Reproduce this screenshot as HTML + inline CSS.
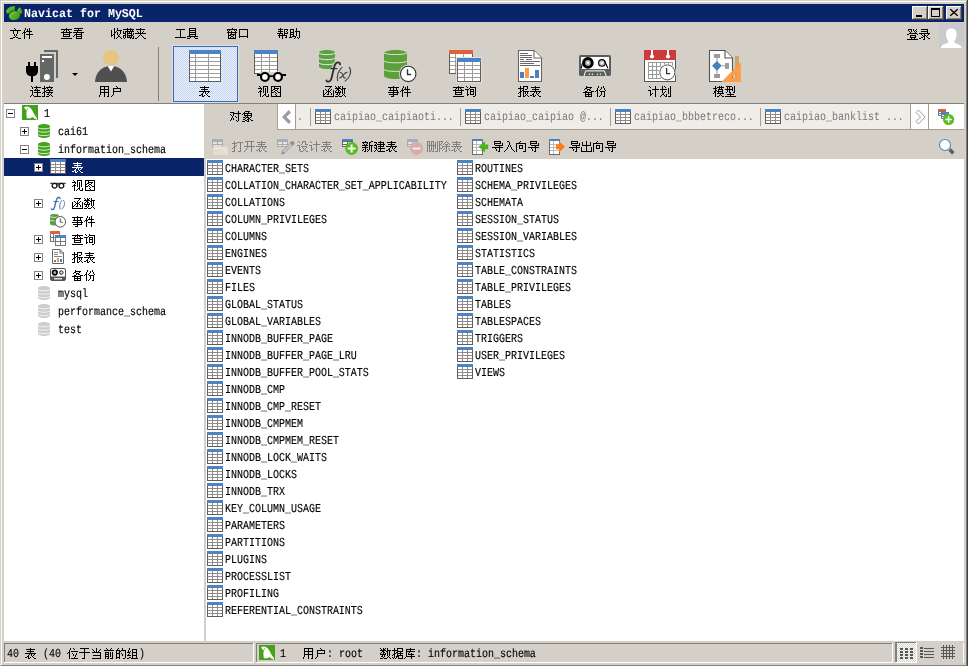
<!DOCTYPE html>
<html lang="zh"><head><meta charset="utf-8"><title>Navicat for MySQL</title>
<style>
html,body{margin:0;padding:0}
body{width:968px;height:666px;position:relative;overflow:hidden;background:#D4D0C8;font-family:"Liberation Sans",sans-serif;font-size:12px;line-height:12px;color:#000}
.a{position:absolute}
div,span,svg{position:absolute;display:block}
svg{overflow:visible}
.c{font-family:"Liberation Sans",sans-serif;font-size:12px;line-height:12px;height:12px;white-space:nowrap;letter-spacing:0}
.m{font-family:"Liberation Mono",monospace;font-size:12.14px;line-height:12px;height:12px;white-space:pre;text-rendering:geometricPrecision;transform:scaleX(.8237);transform-origin:0 0;-webkit-text-stroke:.15px currentColor}
.c i{position:absolute;left:0;top:0;font-style:normal;color:transparent;overflow:hidden;width:100%;height:12px}
.g{color:#808080}
.w{color:#fff}
.px{shape-rendering:crispEdges}
</style></head>
<body>
<div id="app" style="left:0;top:0;width:968px;height:666px;will-change:transform">
<svg width="0" height="0" style="left:0;top:0"><defs><symbol id="tb" viewBox="0 0 16 15"><g shape-rendering="crispEdges"><rect width="16" height="3" fill="#4A84C4"/><rect y="3" width="16" height="12" fill="#5e5e5e"/><rect x="1" y="3" width="14" height="11" fill="#908c8c"/><rect x="1" y="3" width="4" height="2" fill="#fff"/><rect x="6" y="3" width="4" height="2" fill="#fff"/><rect x="11" y="3" width="4" height="2" fill="#fff"/><rect x="1" y="6" width="4" height="2" fill="#fff"/><rect x="6" y="6" width="4" height="2" fill="#fff"/><rect x="11" y="6" width="4" height="2" fill="#fff"/><rect x="1" y="9" width="4" height="2" fill="#fff"/><rect x="6" y="9" width="4" height="2" fill="#fff"/><rect x="11" y="9" width="4" height="2" fill="#fff"/><rect x="1" y="12" width="4" height="2" fill="#fff"/><rect x="6" y="12" width="4" height="2" fill="#fff"/><rect x="11" y="12" width="4" height="2" fill="#fff"/></g></symbol><symbol id="cg" viewBox="0 0 12 14"><path d="M0 2.2C0 1 2.7 0 6 0s6 1 6 2.2v9.6C12 13 9.3 14 6 14s-6-1-6-2.2z" fill="#44A31E"/><path d="M0 3.6c1.5 1.6 10.5 1.6 12 0" fill="none" stroke="#d8f0c8" stroke-width="1"/><path d="M0 7.0c1.5 1.6 10.5 1.6 12 0" fill="none" stroke="#d8f0c8" stroke-width="1"/><path d="M0 10.4c1.5 1.6 10.5 1.6 12 0" fill="none" stroke="#d8f0c8" stroke-width="1"/></symbol><symbol id="cy" viewBox="0 0 12 14"><path d="M0 2.2C0 1 2.7 0 6 0s6 1 6 2.2v9.6C12 13 9.3 14 6 14s-6-1-6-2.2z" fill="#CDCDCD"/><path d="M0 3.6c1.5 1.6 10.5 1.6 12 0" fill="none" stroke="#f4f4f4" stroke-width="1"/><path d="M0 7.0c1.5 1.6 10.5 1.6 12 0" fill="none" stroke="#f4f4f4" stroke-width="1"/><path d="M0 10.4c1.5 1.6 10.5 1.6 12 0" fill="none" stroke="#f4f4f4" stroke-width="1"/></symbol><symbol id="pl" viewBox="0 0 9 9"><g shape-rendering="crispEdges"><rect width="9" height="9" fill="#848488"/><rect x="1" y="1" width="7" height="7" fill="#fff"/><rect x="2" y="4" width="5" height="1" fill="#000"/><rect x="4" y="2" width="1" height="5" fill="#000"/></g></symbol><symbol id="mi" viewBox="0 0 9 9"><g shape-rendering="crispEdges"><rect width="9" height="9" fill="#848488"/><rect x="1" y="1" width="7" height="7" fill="#fff"/><rect x="2" y="4" width="5" height="1" fill="#000"/></g></symbol><symbol id="cn" viewBox="0 0 16 15"><rect width="16" height="15" fill="#43A217"/><path d="M2 2.200L4.200 1.500C6.500 1.300 8.600 2.600 10 5c1.200 2 2 4.200 3.400 6 .8 1 1.600 1.800 1.800 3.600L14 14.700 13.600 13.500 12.600 14C12 13 11 12.300 9.800 12L9.200 13.200H5C4.800 12.500 4.500 12 4.600 11 4.200 9 4.300 7 5 5.400L3.400 4.300z" fill="#fff"/><circle cx="5.600" cy="3.900" r=".6" fill="#43A217"/></symbol></defs></svg>
<svg width="0" height="0" style="left:0;top:0"><defs><symbol id="u4e8b" overflow="visible"><path shape-rendering="crispEdges" d="M5 0h1v1h-1zM0 1h11v1h-11zM2 2h1v1h-1zM5 2h1v1h-1zM8 2h1v1h-1zM2 3h1v1h-1zM5 3h1v1h-1zM8 3h1v1h-1zM1 4h9v1h-9zM5 5h1v1h-1zM9 5h1v1h-1zM0 6h11v1h-11zM5 7h1v1h-1zM9 7h1v1h-1zM1 8h9v1h-9zM5 9h1v1h-1zM3 10h3v1h-3z"/></symbol><symbol id="u4e8e" overflow="visible"><path shape-rendering="crispEdges" d="M1 0h9v1h-9zM5 1h1v1h-1zM5 2h1v1h-1zM5 3h1v1h-1zM0 4h11v1h-11zM5 5h1v1h-1zM5 6h1v1h-1zM5 7h1v1h-1zM5 8h1v1h-1zM5 9h1v1h-1zM3 10h3v1h-3z"/></symbol><symbol id="u4ef6" overflow="visible"><path shape-rendering="crispEdges" d="M3 0h1v1h-1zM7 0h1v1h-1zM3 1h1v1h-1zM5 1h1v1h-1zM7 1h1v1h-1zM2 2h1v1h-1zM5 2h1v1h-1zM7 2h1v1h-1zM2 3h1v1h-1zM4 3h6v1h-6zM1 4h3v1h-3zM7 4h1v1h-1zM0 5h1v1h-1zM2 5h1v1h-1zM7 5h1v1h-1zM2 6h1v1h-1zM4 6h7v1h-7zM2 7h1v1h-1zM7 7h1v1h-1zM2 8h1v1h-1zM7 8h1v1h-1zM2 9h1v1h-1zM7 9h1v1h-1zM2 10h1v1h-1zM7 10h1v1h-1z"/></symbol><symbol id="u4efd" overflow="visible"><path shape-rendering="crispEdges" d="M3 0h1v1h-1zM8 0h1v1h-1zM3 1h1v1h-1zM6 1h1v1h-1zM8 1h1v1h-1zM2 2h1v1h-1zM6 2h1v1h-1zM9 2h1v1h-1zM2 3h1v1h-1zM5 3h1v1h-1zM9 3h1v1h-1zM1 4h2v1h-2zM4 4h1v1h-1zM10 4h1v1h-1zM0 5h1v1h-1zM2 5h1v1h-1zM5 5h5v1h-5zM2 6h1v1h-1zM6 6h1v1h-1zM9 6h1v1h-1zM2 7h1v1h-1zM6 7h1v1h-1zM9 7h1v1h-1zM2 8h1v1h-1zM6 8h1v1h-1zM9 8h1v1h-1zM2 9h1v1h-1zM5 9h1v1h-1zM9 9h1v1h-1zM2 10h1v1h-1zM4 10h1v1h-1zM8 10h2v1h-2z"/></symbol><symbol id="u4f4d" overflow="visible"><path shape-rendering="crispEdges" d="M3 0h1v1h-1zM6 0h1v1h-1zM3 1h1v1h-1zM7 1h1v1h-1zM2 2h1v1h-1zM2 3h1v1h-1zM4 3h7v1h-7zM1 4h2v1h-2zM0 5h1v1h-1zM2 5h1v1h-1zM5 5h1v1h-1zM9 5h1v1h-1zM2 6h1v1h-1zM6 6h1v1h-1zM9 6h1v1h-1zM2 7h1v1h-1zM6 7h1v1h-1zM8 7h1v1h-1zM2 8h1v1h-1zM8 8h1v1h-1zM2 9h1v1h-1zM7 9h1v1h-1zM2 10h1v1h-1zM4 10h7v1h-7z"/></symbol><symbol id="u5165" overflow="visible"><path shape-rendering="crispEdges" d="M3 0h2v1h-2zM5 1h1v1h-1zM5 2h1v1h-1zM5 3h1v1h-1zM4 4h1v1h-1zM6 4h1v1h-1zM4 5h1v1h-1zM6 5h1v1h-1zM3 6h1v1h-1zM7 6h1v1h-1zM3 7h1v1h-1zM7 7h1v1h-1zM2 8h1v1h-1zM8 8h1v1h-1zM1 9h1v1h-1zM9 9h1v1h-1zM0 10h1v1h-1zM10 10h1v1h-1z"/></symbol><symbol id="u5177" overflow="visible"><path shape-rendering="crispEdges" d="M2 0h7v1h-7zM2 1h1v1h-1zM8 1h1v1h-1zM2 2h7v1h-7zM2 3h1v1h-1zM8 3h1v1h-1zM2 4h7v1h-7zM2 5h1v1h-1zM8 5h1v1h-1zM2 6h7v1h-7zM2 7h1v1h-1zM8 7h1v1h-1zM0 8h11v1h-11zM3 9h1v1h-1zM7 9h1v1h-1zM0 10h3v1h-3zM8 10h3v1h-3z"/></symbol><symbol id="u51fa" overflow="visible"><path shape-rendering="crispEdges" d="M5 0h1v1h-1zM1 1h1v1h-1zM5 1h1v1h-1zM9 1h1v1h-1zM1 2h1v1h-1zM5 2h1v1h-1zM9 2h1v1h-1zM1 3h1v1h-1zM5 3h1v1h-1zM9 3h1v1h-1zM1 4h9v1h-9zM5 5h1v1h-1zM0 6h1v1h-1zM5 6h1v1h-1zM10 6h1v1h-1zM0 7h1v1h-1zM5 7h1v1h-1zM10 7h1v1h-1zM0 8h1v1h-1zM5 8h1v1h-1zM10 8h1v1h-1zM0 9h1v1h-1zM5 9h1v1h-1zM10 9h1v1h-1zM0 10h11v1h-11z"/></symbol><symbol id="u51fd" overflow="visible"><path shape-rendering="crispEdges" d="M2 0h7v1h-7zM7 1h1v1h-1zM6 2h1v1h-1zM2 3h1v1h-1zM5 3h1v1h-1zM8 3h1v1h-1zM0 4h1v1h-1zM3 4h1v1h-1zM5 4h1v1h-1zM7 4h1v1h-1zM10 4h1v1h-1zM0 5h1v1h-1zM4 5h3v1h-3zM10 5h1v1h-1zM0 6h1v1h-1zM3 6h1v1h-1zM5 6h1v1h-1zM7 6h1v1h-1zM10 6h1v1h-1zM0 7h1v1h-1zM2 7h1v1h-1zM5 7h1v1h-1zM8 7h1v1h-1zM10 7h1v1h-1zM0 8h2v1h-2zM4 8h2v1h-2zM8 8h1v1h-1zM10 8h1v1h-1zM0 9h1v1h-1zM10 9h1v1h-1zM0 10h11v1h-11z"/></symbol><symbol id="u5212" overflow="visible"><path shape-rendering="crispEdges" d="M2 0h1v1h-1zM4 0h1v1h-1zM10 0h1v1h-1zM2 1h1v1h-1zM5 1h1v1h-1zM10 1h1v1h-1zM2 2h1v1h-1zM8 2h1v1h-1zM10 2h1v1h-1zM0 3h7v1h-7zM8 3h1v1h-1zM10 3h1v1h-1zM2 4h1v1h-1zM8 4h1v1h-1zM10 4h1v1h-1zM2 5h1v1h-1zM5 5h1v1h-1zM8 5h1v1h-1zM10 5h1v1h-1zM2 6h1v1h-1zM4 6h1v1h-1zM8 6h1v1h-1zM10 6h1v1h-1zM3 7h1v1h-1zM8 7h1v1h-1zM10 7h1v1h-1zM2 8h2v1h-2zM6 8h1v1h-1zM10 8h1v1h-1zM1 9h1v1h-1zM4 9h1v1h-1zM6 9h1v1h-1zM10 9h1v1h-1zM0 10h1v1h-1zM5 10h2v1h-2zM8 10h3v1h-3z"/></symbol><symbol id="u5220" overflow="visible"><path shape-rendering="crispEdges" d="M0 0h3v1h-3zM4 0h3v1h-3zM10 0h1v1h-1zM0 1h1v1h-1zM2 1h1v1h-1zM4 1h1v1h-1zM6 1h1v1h-1zM8 1h1v1h-1zM10 1h1v1h-1zM0 2h1v1h-1zM2 2h1v1h-1zM4 2h1v1h-1zM6 2h1v1h-1zM8 2h1v1h-1zM10 2h1v1h-1zM0 3h1v1h-1zM2 3h1v1h-1zM4 3h1v1h-1zM6 3h1v1h-1zM8 3h1v1h-1zM10 3h1v1h-1zM0 4h9v1h-9zM10 4h1v1h-1zM0 5h1v1h-1zM2 5h1v1h-1zM4 5h1v1h-1zM6 5h1v1h-1zM8 5h1v1h-1zM10 5h1v1h-1zM0 6h1v1h-1zM2 6h1v1h-1zM4 6h1v1h-1zM6 6h1v1h-1zM8 6h1v1h-1zM10 6h1v1h-1zM0 7h1v1h-1zM2 7h1v1h-1zM4 7h1v1h-1zM6 7h1v1h-1zM8 7h1v1h-1zM10 7h1v1h-1zM0 8h1v1h-1zM2 8h1v1h-1zM4 8h1v1h-1zM6 8h1v1h-1zM10 8h1v1h-1zM0 9h1v1h-1zM2 9h1v1h-1zM4 9h1v1h-1zM6 9h1v1h-1zM10 9h1v1h-1zM0 10h1v1h-1zM2 10h2v1h-2zM5 10h2v1h-2zM8 10h3v1h-3z"/></symbol><symbol id="u524d" overflow="visible"><path shape-rendering="crispEdges" d="M3 0h1v1h-1zM8 0h1v1h-1zM4 1h1v1h-1zM7 1h1v1h-1zM1 2h10v1h-10zM2 4h4v1h-4zM7 4h1v1h-1zM9 4h1v1h-1zM2 5h1v1h-1zM5 5h1v1h-1zM7 5h1v1h-1zM9 5h1v1h-1zM2 6h4v1h-4zM7 6h1v1h-1zM9 6h1v1h-1zM2 7h1v1h-1zM5 7h1v1h-1zM7 7h1v1h-1zM9 7h1v1h-1zM2 8h4v1h-4zM7 8h1v1h-1zM9 8h1v1h-1zM2 9h1v1h-1zM5 9h1v1h-1zM9 9h1v1h-1zM2 10h1v1h-1zM4 10h2v1h-2zM7 10h3v1h-3z"/></symbol><symbol id="u52a9" overflow="visible"><path shape-rendering="crispEdges" d="M7 0h1v1h-1zM1 1h4v1h-4zM7 1h1v1h-1zM1 2h1v1h-1zM4 2h1v1h-1zM7 2h1v1h-1zM1 3h1v1h-1zM4 3h1v1h-1zM6 3h5v1h-5zM1 4h4v1h-4zM7 4h1v1h-1zM10 4h1v1h-1zM1 5h1v1h-1zM4 5h1v1h-1zM7 5h1v1h-1zM10 5h1v1h-1zM1 6h4v1h-4zM7 6h1v1h-1zM10 6h1v1h-1zM1 7h1v1h-1zM4 7h1v1h-1zM7 7h1v1h-1zM10 7h1v1h-1zM1 8h1v1h-1zM3 8h4v1h-4zM10 8h1v1h-1zM0 9h3v1h-3zM6 9h1v1h-1zM8 9h1v1h-1zM10 9h1v1h-1zM5 10h1v1h-1zM9 10h1v1h-1z"/></symbol><symbol id="u53e3" overflow="visible"><path shape-rendering="crispEdges" d="M1 1h9v1h-9zM1 2h1v1h-1zM9 2h1v1h-1zM1 3h1v1h-1zM9 3h1v1h-1zM1 4h1v1h-1zM9 4h1v1h-1zM1 5h1v1h-1zM9 5h1v1h-1zM1 6h1v1h-1zM9 6h1v1h-1zM1 7h1v1h-1zM9 7h1v1h-1zM1 8h9v1h-9zM1 9h1v1h-1zM9 9h1v1h-1z"/></symbol><symbol id="u5411" overflow="visible"><path shape-rendering="crispEdges" d="M4 0h1v1h-1zM3 1h1v1h-1zM0 2h10v1h-10zM0 3h1v1h-1zM9 3h1v1h-1zM0 4h1v1h-1zM3 4h4v1h-4zM9 4h1v1h-1zM0 5h1v1h-1zM3 5h1v1h-1zM6 5h1v1h-1zM9 5h1v1h-1zM0 6h1v1h-1zM3 6h1v1h-1zM6 6h1v1h-1zM9 6h1v1h-1zM0 7h1v1h-1zM3 7h4v1h-4zM9 7h1v1h-1zM0 8h1v1h-1zM9 8h1v1h-1zM0 9h1v1h-1zM9 9h1v1h-1zM0 10h1v1h-1zM7 10h3v1h-3z"/></symbol><symbol id="u56fe" overflow="visible"><path shape-rendering="crispEdges" d="M1 0h10v1h-10zM1 1h1v1h-1zM4 1h1v1h-1zM10 1h1v1h-1zM1 2h1v1h-1zM4 2h5v1h-5zM10 2h1v1h-1zM1 3h1v1h-1zM3 3h2v1h-2zM7 3h1v1h-1zM10 3h1v1h-1zM1 4h2v1h-2zM5 4h2v1h-2zM10 4h1v1h-1zM1 5h1v1h-1zM4 5h1v1h-1zM7 5h1v1h-1zM10 5h1v1h-1zM1 6h3v1h-3zM5 6h1v1h-1zM8 6h3v1h-3zM1 7h1v1h-1zM6 7h1v1h-1zM10 7h1v1h-1zM1 8h1v1h-1zM5 8h1v1h-1zM10 8h1v1h-1zM1 9h1v1h-1zM6 9h1v1h-1zM10 9h1v1h-1zM1 10h10v1h-10z"/></symbol><symbol id="u578b" overflow="visible"><path shape-rendering="crispEdges" d="M1 0h6v1h-6zM9 0h1v1h-1zM2 1h1v1h-1zM4 1h1v1h-1zM7 1h1v1h-1zM9 1h1v1h-1zM2 2h1v1h-1zM4 2h1v1h-1zM7 2h1v1h-1zM9 2h1v1h-1zM0 3h8v1h-8zM9 3h1v1h-1zM2 4h1v1h-1zM4 4h1v1h-1zM7 4h1v1h-1zM9 4h1v1h-1zM2 5h1v1h-1zM4 5h1v1h-1zM9 5h1v1h-1zM1 6h1v1h-1zM4 6h2v1h-2zM8 6h2v1h-2zM5 7h1v1h-1zM2 8h7v1h-7zM5 9h1v1h-1zM0 10h11v1h-11z"/></symbol><symbol id="u5907" overflow="visible"><path shape-rendering="crispEdges" d="M3 0h1v1h-1zM3 1h6v1h-6zM2 2h2v1h-2zM7 2h1v1h-1zM1 3h1v1h-1zM4 3h3v1h-3zM4 4h1v1h-1zM6 4h2v1h-2zM2 5h2v1h-2zM8 5h3v1h-3zM0 6h9v1h-9zM2 7h1v1h-1zM5 7h1v1h-1zM8 7h1v1h-1zM2 8h7v1h-7zM2 9h1v1h-1zM5 9h1v1h-1zM8 9h1v1h-1zM2 10h7v1h-7z"/></symbol><symbol id="u5939" overflow="visible"><path shape-rendering="crispEdges" d="M5 0h1v1h-1zM1 1h9v1h-9zM5 2h1v1h-1zM2 3h1v1h-1zM5 3h1v1h-1zM8 3h1v1h-1zM3 4h1v1h-1zM5 4h1v1h-1zM7 4h1v1h-1zM0 5h11v1h-11zM5 6h1v1h-1zM4 7h1v1h-1zM6 7h1v1h-1zM3 8h1v1h-1zM7 8h1v1h-1zM2 9h1v1h-1zM8 9h1v1h-1zM0 10h2v1h-2zM9 10h2v1h-2z"/></symbol><symbol id="u5bf9" overflow="visible"><path shape-rendering="crispEdges" d="M8 0h1v1h-1zM0 1h4v1h-4zM8 1h1v1h-1zM3 2h8v1h-8zM0 3h1v1h-1zM3 3h1v1h-1zM8 3h1v1h-1zM1 4h1v1h-1zM3 4h1v1h-1zM8 4h1v1h-1zM2 5h1v1h-1zM5 5h1v1h-1zM8 5h1v1h-1zM2 6h1v1h-1zM6 6h1v1h-1zM8 6h1v1h-1zM1 7h1v1h-1zM3 7h1v1h-1zM8 7h1v1h-1zM1 8h1v1h-1zM3 8h1v1h-1zM8 8h1v1h-1zM0 9h1v1h-1zM6 9h1v1h-1zM8 9h1v1h-1zM7 10h1v1h-1z"/></symbol><symbol id="u5bfc" overflow="visible"><path shape-rendering="crispEdges" d="M2 0h7v1h-7zM2 1h1v1h-1zM8 1h1v1h-1zM2 2h7v1h-7zM10 2h1v1h-1zM2 3h1v1h-1zM10 3h1v1h-1zM3 4h8v1h-8zM7 5h1v1h-1zM0 6h11v1h-11zM3 7h1v1h-1zM7 7h1v1h-1zM4 8h1v1h-1zM7 8h1v1h-1zM4 9h1v1h-1zM7 9h1v1h-1zM6 10h2v1h-2z"/></symbol><symbol id="u5de5" overflow="visible"><path shape-rendering="crispEdges" d="M1 1h9v1h-9zM5 2h1v1h-1zM5 3h1v1h-1zM5 4h1v1h-1zM5 5h1v1h-1zM5 6h1v1h-1zM5 7h1v1h-1zM5 8h1v1h-1zM0 9h11v1h-11z"/></symbol><symbol id="u5e2e" overflow="visible"><path shape-rendering="crispEdges" d="M3 0h1v1h-1zM1 1h5v1h-5zM7 1h4v1h-4zM3 2h1v1h-1zM7 2h1v1h-1zM10 2h1v1h-1zM1 3h5v1h-5zM7 3h1v1h-1zM9 3h1v1h-1zM3 4h1v1h-1zM7 4h1v1h-1zM10 4h1v1h-1zM0 5h6v1h-6zM7 5h4v1h-4zM2 6h1v1h-1zM5 6h1v1h-1zM7 6h1v1h-1zM1 7h9v1h-9zM2 8h1v1h-1zM5 8h1v1h-1zM9 8h1v1h-1zM2 9h1v1h-1zM5 9h1v1h-1zM8 9h2v1h-2zM5 10h1v1h-1z"/></symbol><symbol id="u5e93" overflow="visible"><path shape-rendering="crispEdges" d="M6 0h1v1h-1zM2 1h9v1h-9zM2 2h1v1h-1zM6 2h1v1h-1zM2 3h9v1h-9zM2 4h1v1h-1zM5 4h1v1h-1zM2 5h1v1h-1zM4 5h1v1h-1zM7 5h1v1h-1zM2 6h1v1h-1zM4 6h6v1h-6zM2 7h1v1h-1zM7 7h1v1h-1zM2 8h9v1h-9zM1 9h1v1h-1zM7 9h1v1h-1zM0 10h1v1h-1zM7 10h1v1h-1z"/></symbol><symbol id="u5efa" overflow="visible"><path shape-rendering="crispEdges" d="M6 0h1v1h-1zM0 1h3v1h-3zM4 1h6v1h-6zM2 2h1v1h-1zM6 2h1v1h-1zM9 2h1v1h-1zM1 3h1v1h-1zM3 3h8v1h-8zM0 4h3v1h-3zM6 4h1v1h-1zM9 4h1v1h-1zM2 5h1v1h-1zM4 5h6v1h-6zM0 6h1v1h-1zM2 6h1v1h-1zM6 6h1v1h-1zM1 7h2v1h-2zM4 7h7v1h-7zM2 8h1v1h-1zM6 8h1v1h-1zM1 9h1v1h-1zM3 9h1v1h-1zM6 9h1v1h-1zM0 10h1v1h-1zM4 10h7v1h-7z"/></symbol><symbol id="u5f00" overflow="visible"><path shape-rendering="crispEdges" d="M1 0h9v1h-9zM3 1h1v1h-1zM7 1h1v1h-1zM3 2h1v1h-1zM7 2h1v1h-1zM3 3h1v1h-1zM7 3h1v1h-1zM3 4h1v1h-1zM7 4h1v1h-1zM0 5h11v1h-11zM3 6h1v1h-1zM7 6h1v1h-1zM2 7h1v1h-1zM7 7h1v1h-1zM2 8h1v1h-1zM7 8h1v1h-1zM1 9h1v1h-1zM7 9h1v1h-1zM0 10h1v1h-1zM7 10h1v1h-1z"/></symbol><symbol id="u5f53" overflow="visible"><path shape-rendering="crispEdges" d="M5 0h1v1h-1zM1 1h1v1h-1zM5 1h1v1h-1zM9 1h1v1h-1zM2 2h1v1h-1zM5 2h1v1h-1zM8 2h1v1h-1zM3 3h1v1h-1zM5 3h1v1h-1zM7 3h1v1h-1zM1 4h9v1h-9zM9 5h1v1h-1zM9 6h1v1h-1zM2 7h8v1h-8zM9 8h1v1h-1zM9 9h1v1h-1zM1 10h9v1h-9z"/></symbol><symbol id="u5f55" overflow="visible"><path shape-rendering="crispEdges" d="M2 0h7v1h-7zM8 1h1v1h-1zM2 2h7v1h-7zM8 3h1v1h-1zM0 4h11v1h-11zM2 5h1v1h-1zM5 5h1v1h-1zM9 5h1v1h-1zM3 6h1v1h-1zM5 6h2v1h-2zM8 6h1v1h-1zM4 7h2v1h-2zM7 7h1v1h-1zM2 8h2v1h-2zM5 8h1v1h-1zM8 8h1v1h-1zM0 9h2v1h-2zM5 9h1v1h-1zM9 9h2v1h-2zM4 10h2v1h-2z"/></symbol><symbol id="u6237" overflow="visible"><path shape-rendering="crispEdges" d="M5 0h1v1h-1zM6 1h1v1h-1zM2 2h8v1h-8zM2 3h1v1h-1zM9 3h1v1h-1zM2 4h1v1h-1zM9 4h1v1h-1zM2 5h8v1h-8zM2 6h1v1h-1zM2 7h1v1h-1zM2 8h1v1h-1zM1 9h1v1h-1zM0 10h1v1h-1z"/></symbol><symbol id="u6253" overflow="visible"><path shape-rendering="crispEdges" d="M2 0h1v1h-1zM2 1h1v1h-1zM5 1h6v1h-6zM0 2h5v1h-5zM8 2h1v1h-1zM2 3h1v1h-1zM8 3h1v1h-1zM2 4h1v1h-1zM4 4h1v1h-1zM8 4h1v1h-1zM2 5h2v1h-2zM8 5h1v1h-1zM1 6h2v1h-2zM8 6h1v1h-1zM0 7h1v1h-1zM2 7h1v1h-1zM8 7h1v1h-1zM2 8h1v1h-1zM8 8h1v1h-1zM2 9h1v1h-1zM8 9h1v1h-1zM0 10h3v1h-3zM6 10h3v1h-3z"/></symbol><symbol id="u62a5" overflow="visible"><path shape-rendering="crispEdges" d="M2 0h1v1h-1zM5 0h5v1h-5zM2 1h1v1h-1zM5 1h1v1h-1zM9 1h1v1h-1zM0 2h6v1h-6zM9 2h1v1h-1zM2 3h1v1h-1zM5 3h1v1h-1zM7 3h2v1h-2zM2 4h1v1h-1zM4 4h2v1h-2zM2 5h2v1h-2zM5 5h6v1h-6zM1 6h2v1h-2zM5 6h1v1h-1zM7 6h1v1h-1zM9 6h1v1h-1zM0 7h1v1h-1zM2 7h1v1h-1zM5 7h1v1h-1zM7 7h1v1h-1zM9 7h1v1h-1zM2 8h1v1h-1zM5 8h1v1h-1zM8 8h1v1h-1zM2 9h1v1h-1zM5 9h1v1h-1zM7 9h1v1h-1zM9 9h1v1h-1zM0 10h3v1h-3zM5 10h2v1h-2zM10 10h1v1h-1z"/></symbol><symbol id="u636e" overflow="visible"><path shape-rendering="crispEdges" d="M2 0h1v1h-1zM5 0h6v1h-6zM2 1h1v1h-1zM5 1h1v1h-1zM10 1h1v1h-1zM0 2h6v1h-6zM10 2h1v1h-1zM2 3h1v1h-1zM5 3h6v1h-6zM2 4h1v1h-1zM4 4h2v1h-2zM8 4h1v1h-1zM2 5h2v1h-2zM5 5h6v1h-6zM1 6h2v1h-2zM5 6h1v1h-1zM8 6h1v1h-1zM0 7h1v1h-1zM2 7h1v1h-1zM5 7h6v1h-6zM2 8h1v1h-1zM4 8h3v1h-3zM10 8h1v1h-1zM0 9h1v1h-1zM2 9h1v1h-1zM4 9h1v1h-1zM6 9h1v1h-1zM10 9h1v1h-1zM1 10h1v1h-1zM3 10h1v1h-1zM6 10h5v1h-5z"/></symbol><symbol id="u63a5" overflow="visible"><path shape-rendering="crispEdges" d="M2 0h1v1h-1zM7 0h1v1h-1zM2 1h1v1h-1zM4 1h7v1h-7zM0 2h4v1h-4zM5 2h1v1h-1zM9 2h1v1h-1zM2 3h1v1h-1zM6 3h1v1h-1zM8 3h1v1h-1zM2 4h1v1h-1zM4 4h7v1h-7zM2 5h2v1h-2zM7 5h1v1h-1zM1 6h2v1h-2zM4 6h7v1h-7zM0 7h1v1h-1zM2 7h1v1h-1zM6 7h1v1h-1zM9 7h1v1h-1zM2 8h1v1h-1zM5 8h2v1h-2zM8 8h1v1h-1zM2 9h1v1h-1zM7 9h1v1h-1zM9 9h1v1h-1zM0 10h3v1h-3zM4 10h3v1h-3zM10 10h1v1h-1z"/></symbol><symbol id="u6536" overflow="visible"><path shape-rendering="crispEdges" d="M3 0h1v1h-1zM6 0h1v1h-1zM3 1h1v1h-1zM6 1h1v1h-1zM0 2h1v1h-1zM3 2h1v1h-1zM6 2h5v1h-5zM0 3h1v1h-1zM3 3h1v1h-1zM5 3h1v1h-1zM9 3h1v1h-1zM0 4h1v1h-1zM3 4h2v1h-2zM6 4h1v1h-1zM9 4h1v1h-1zM0 5h1v1h-1zM3 5h1v1h-1zM6 5h1v1h-1zM9 5h1v1h-1zM0 6h1v1h-1zM2 6h2v1h-2zM6 6h1v1h-1zM8 6h1v1h-1zM0 7h2v1h-2zM3 7h1v1h-1zM7 7h1v1h-1zM0 8h1v1h-1zM3 8h1v1h-1zM7 8h2v1h-2zM3 9h1v1h-1zM6 9h1v1h-1zM9 9h1v1h-1zM3 10h1v1h-1zM5 10h1v1h-1zM10 10h1v1h-1z"/></symbol><symbol id="u6570" overflow="visible"><path shape-rendering="crispEdges" d="M0 0h1v1h-1zM3 0h1v1h-1zM5 0h1v1h-1zM7 0h1v1h-1zM1 1h1v1h-1zM3 1h2v1h-2zM7 1h1v1h-1zM0 2h6v1h-6zM7 2h4v1h-4zM2 3h2v1h-2zM6 3h2v1h-2zM9 3h1v1h-1zM1 4h1v1h-1zM3 4h2v1h-2zM7 4h1v1h-1zM9 4h1v1h-1zM0 5h1v1h-1zM3 5h1v1h-1zM5 5h1v1h-1zM7 5h1v1h-1zM9 5h1v1h-1zM0 6h6v1h-6zM7 6h1v1h-1zM9 6h1v1h-1zM2 7h1v1h-1zM4 7h1v1h-1zM7 7h1v1h-1zM9 7h1v1h-1zM1 8h2v1h-2zM4 8h1v1h-1zM8 8h1v1h-1zM3 9h1v1h-1zM7 9h1v1h-1zM9 9h1v1h-1zM0 10h3v1h-3zM4 10h3v1h-3zM10 10h1v1h-1z"/></symbol><symbol id="u6587" overflow="visible"><path shape-rendering="crispEdges" d="M4 0h1v1h-1zM5 1h1v1h-1zM0 2h11v1h-11zM3 3h1v1h-1zM7 3h1v1h-1zM3 4h1v1h-1zM7 4h1v1h-1zM3 5h1v1h-1zM7 5h1v1h-1zM4 6h1v1h-1zM6 6h1v1h-1zM4 7h1v1h-1zM6 7h1v1h-1zM5 8h1v1h-1zM3 9h2v1h-2zM6 9h2v1h-2zM0 10h3v1h-3zM8 10h3v1h-3z"/></symbol><symbol id="u65b0" overflow="visible"><path shape-rendering="crispEdges" d="M3 0h1v1h-1zM9 0h2v1h-2zM0 1h6v1h-6zM7 1h2v1h-2zM1 2h1v1h-1zM5 2h1v1h-1zM7 2h1v1h-1zM2 3h1v1h-1zM4 3h1v1h-1zM7 3h1v1h-1zM0 4h6v1h-6zM7 4h4v1h-4zM3 5h1v1h-1zM7 5h1v1h-1zM9 5h1v1h-1zM0 6h6v1h-6zM7 6h1v1h-1zM9 6h1v1h-1zM3 7h1v1h-1zM7 7h1v1h-1zM9 7h1v1h-1zM1 8h1v1h-1zM3 8h1v1h-1zM5 8h1v1h-1zM7 8h1v1h-1zM9 8h1v1h-1zM0 9h1v1h-1zM3 9h1v1h-1zM6 9h1v1h-1zM9 9h1v1h-1zM2 10h2v1h-2zM5 10h1v1h-1zM9 10h1v1h-1z"/></symbol><symbol id="u67e5" overflow="visible"><path shape-rendering="crispEdges" d="M5 0h1v1h-1zM0 1h11v1h-11zM3 2h1v1h-1zM5 2h1v1h-1zM7 2h1v1h-1zM2 3h1v1h-1zM5 3h1v1h-1zM8 3h1v1h-1zM0 4h11v1h-11zM2 5h1v1h-1zM8 5h1v1h-1zM2 6h7v1h-7zM2 7h1v1h-1zM8 7h1v1h-1zM2 8h7v1h-7zM0 10h11v1h-11z"/></symbol><symbol id="u6a21" overflow="visible"><path shape-rendering="crispEdges" d="M2 0h1v1h-1zM6 0h1v1h-1zM8 0h1v1h-1zM2 1h1v1h-1zM4 1h7v1h-7zM0 2h4v1h-4zM6 2h1v1h-1zM8 2h1v1h-1zM2 3h1v1h-1zM5 3h5v1h-5zM2 4h2v1h-2zM5 4h1v1h-1zM9 4h1v1h-1zM1 5h2v1h-2zM4 5h6v1h-6zM1 6h2v1h-2zM5 6h1v1h-1zM9 6h1v1h-1zM0 7h1v1h-1zM2 7h1v1h-1zM4 7h7v1h-7zM2 8h1v1h-1zM7 8h1v1h-1zM2 9h1v1h-1zM6 9h1v1h-1zM8 9h1v1h-1zM2 10h1v1h-1zM4 10h2v1h-2zM9 10h2v1h-2z"/></symbol><symbol id="u7528" overflow="visible"><path shape-rendering="crispEdges" d="M1 0h9v1h-9zM1 1h1v1h-1zM5 1h1v1h-1zM9 1h1v1h-1zM1 2h1v1h-1zM5 2h1v1h-1zM9 2h1v1h-1zM1 3h9v1h-9zM1 4h1v1h-1zM5 4h1v1h-1zM9 4h1v1h-1zM1 5h1v1h-1zM5 5h1v1h-1zM9 5h1v1h-1zM1 6h9v1h-9zM1 7h1v1h-1zM5 7h1v1h-1zM9 7h1v1h-1zM1 8h1v1h-1zM5 8h1v1h-1zM9 8h1v1h-1zM0 9h1v1h-1zM5 9h1v1h-1zM9 9h1v1h-1zM0 10h1v1h-1zM5 10h1v1h-1zM8 10h2v1h-2z"/></symbol><symbol id="u767b" overflow="visible"><path shape-rendering="crispEdges" d="M1 0h4v1h-4zM6 0h1v1h-1zM9 0h1v1h-1zM1 1h1v1h-1zM4 1h1v1h-1zM6 1h1v1h-1zM8 1h1v1h-1zM2 2h1v1h-1zM4 2h1v1h-1zM7 2h1v1h-1zM9 2h1v1h-1zM3 3h1v1h-1zM8 3h1v1h-1zM2 4h8v1h-8zM0 5h2v1h-2zM10 5h1v1h-1zM3 6h6v1h-6zM3 7h1v1h-1zM8 7h1v1h-1zM3 8h6v1h-6zM4 9h1v1h-1zM7 9h1v1h-1zM0 10h11v1h-11z"/></symbol><symbol id="u7684" overflow="visible"><path shape-rendering="crispEdges" d="M3 0h1v1h-1zM7 0h1v1h-1zM2 1h1v1h-1zM7 1h1v1h-1zM1 2h4v1h-4zM6 2h5v1h-5zM1 3h1v1h-1zM4 3h2v1h-2zM10 3h1v1h-1zM1 4h1v1h-1zM4 4h1v1h-1zM10 4h1v1h-1zM1 5h4v1h-4zM6 5h1v1h-1zM10 5h1v1h-1zM1 6h1v1h-1zM4 6h1v1h-1zM7 6h1v1h-1zM10 6h1v1h-1zM1 7h1v1h-1zM4 7h1v1h-1zM7 7h1v1h-1zM10 7h1v1h-1zM1 8h1v1h-1zM4 8h1v1h-1zM10 8h1v1h-1zM1 9h4v1h-4zM10 9h1v1h-1zM1 10h1v1h-1zM4 10h1v1h-1zM8 10h2v1h-2z"/></symbol><symbol id="u770b" overflow="visible"><path shape-rendering="crispEdges" d="M1 0h9v1h-9zM5 1h1v1h-1zM1 2h8v1h-8zM4 3h1v1h-1zM0 4h11v1h-11zM3 5h1v1h-1zM8 5h1v1h-1zM2 6h7v1h-7zM1 7h1v1h-1zM3 7h1v1h-1zM8 7h1v1h-1zM0 8h1v1h-1zM3 8h6v1h-6zM3 9h1v1h-1zM8 9h1v1h-1zM3 10h6v1h-6z"/></symbol><symbol id="u7a97" overflow="visible"><path shape-rendering="crispEdges" d="M6 0h1v1h-1zM1 1h10v1h-10zM1 2h1v1h-1zM3 2h1v1h-1zM8 2h1v1h-1zM10 2h1v1h-1zM2 3h1v1h-1zM5 3h1v1h-1zM9 3h1v1h-1zM1 4h10v1h-10zM2 5h1v1h-1zM5 5h1v1h-1zM9 5h1v1h-1zM2 6h1v1h-1zM4 6h6v1h-6zM2 7h3v1h-3zM7 7h1v1h-1zM9 7h1v1h-1zM2 8h1v1h-1zM5 8h2v1h-2zM9 8h1v1h-1zM2 9h1v1h-1zM4 9h1v1h-1zM7 9h1v1h-1zM9 9h1v1h-1zM2 10h8v1h-8z"/></symbol><symbol id="u7ec4" overflow="visible"><path shape-rendering="crispEdges" d="M2 0h1v1h-1zM2 1h1v1h-1zM5 1h5v1h-5zM1 2h1v1h-1zM5 2h1v1h-1zM9 2h1v1h-1zM1 3h1v1h-1zM3 3h1v1h-1zM5 3h1v1h-1zM9 3h1v1h-1zM0 4h3v1h-3zM5 4h5v1h-5zM2 5h1v1h-1zM5 5h1v1h-1zM9 5h1v1h-1zM1 6h1v1h-1zM5 6h1v1h-1zM9 6h1v1h-1zM0 7h4v1h-4zM5 7h5v1h-5zM5 8h1v1h-1zM9 8h1v1h-1zM2 9h2v1h-2zM5 9h1v1h-1zM9 9h1v1h-1zM0 10h2v1h-2zM4 10h7v1h-7z"/></symbol><symbol id="u85cf" overflow="visible"><path shape-rendering="crispEdges" d="M4 0h1v1h-1zM7 0h1v1h-1zM0 1h11v1h-11zM4 2h1v1h-1zM7 2h1v1h-1zM9 2h1v1h-1zM0 3h1v1h-1zM2 3h9v1h-9zM0 4h1v1h-1zM2 4h1v1h-1zM4 4h1v1h-1zM6 4h1v1h-1zM8 4h1v1h-1zM0 5h3v1h-3zM4 5h5v1h-5zM10 5h1v1h-1zM2 6h1v1h-1zM4 6h1v1h-1zM8 6h1v1h-1zM10 6h1v1h-1zM0 7h3v1h-3zM4 7h6v1h-6zM0 8h1v1h-1zM2 8h1v1h-1zM4 8h1v1h-1zM6 8h1v1h-1zM8 8h1v1h-1zM10 8h1v1h-1zM0 9h1v1h-1zM2 9h1v1h-1zM4 9h5v1h-5zM10 9h1v1h-1zM1 10h1v1h-1zM7 10h1v1h-1zM9 10h2v1h-2z"/></symbol><symbol id="u8868" overflow="visible"><path shape-rendering="crispEdges" d="M5 0h1v1h-1zM1 1h9v1h-9zM5 2h1v1h-1zM2 3h7v1h-7zM5 4h1v1h-1zM0 5h11v1h-11zM4 6h1v1h-1zM6 6h1v1h-1zM9 6h1v1h-1zM3 7h1v1h-1zM6 7h1v1h-1zM8 7h1v1h-1zM2 8h2v1h-2zM7 8h1v1h-1zM0 9h2v1h-2zM3 9h1v1h-1zM5 9h1v1h-1zM8 9h1v1h-1zM3 10h2v1h-2zM9 10h2v1h-2z"/></symbol><symbol id="u89c6" overflow="visible"><path shape-rendering="crispEdges" d="M1 0h1v1h-1zM5 0h5v1h-5zM2 1h1v1h-1zM5 1h1v1h-1zM9 1h1v1h-1zM0 2h4v1h-4zM5 2h1v1h-1zM7 2h1v1h-1zM9 2h1v1h-1zM3 3h1v1h-1zM5 3h1v1h-1zM7 3h1v1h-1zM9 3h1v1h-1zM2 4h1v1h-1zM5 4h1v1h-1zM7 4h1v1h-1zM9 4h1v1h-1zM1 5h3v1h-3zM5 5h1v1h-1zM7 5h1v1h-1zM9 5h1v1h-1zM0 6h1v1h-1zM2 6h1v1h-1zM5 6h1v1h-1zM7 6h1v1h-1zM9 6h1v1h-1zM2 7h1v1h-1zM7 7h1v1h-1zM2 8h1v1h-1zM6 8h2v1h-2zM10 8h1v1h-1zM2 9h1v1h-1zM5 9h1v1h-1zM7 9h1v1h-1zM10 9h1v1h-1zM2 10h1v1h-1zM4 10h1v1h-1zM8 10h3v1h-3z"/></symbol><symbol id="u8ba1" overflow="visible"><path shape-rendering="crispEdges" d="M1 0h1v1h-1zM7 0h1v1h-1zM2 1h1v1h-1zM7 1h1v1h-1zM7 2h1v1h-1zM4 3h7v1h-7zM0 4h3v1h-3zM7 4h1v1h-1zM2 5h1v1h-1zM7 5h1v1h-1zM2 6h1v1h-1zM7 6h1v1h-1zM2 7h1v1h-1zM4 7h1v1h-1zM7 7h1v1h-1zM2 8h2v1h-2zM7 8h1v1h-1zM2 9h1v1h-1zM7 9h1v1h-1zM7 10h1v1h-1z"/></symbol><symbol id="u8bbe" overflow="visible"><path shape-rendering="crispEdges" d="M1 0h1v1h-1zM5 0h4v1h-4zM2 1h1v1h-1zM5 1h1v1h-1zM8 1h1v1h-1zM5 2h1v1h-1zM8 2h1v1h-1zM4 3h1v1h-1zM8 3h3v1h-3zM0 4h3v1h-3zM2 5h1v1h-1zM4 5h6v1h-6zM2 6h1v1h-1zM5 6h1v1h-1zM9 6h1v1h-1zM2 7h1v1h-1zM6 7h1v1h-1zM8 7h1v1h-1zM2 8h2v1h-2zM7 8h1v1h-1zM2 9h1v1h-1zM6 9h1v1h-1zM8 9h1v1h-1zM3 10h3v1h-3zM9 10h2v1h-2z"/></symbol><symbol id="u8be2" overflow="visible"><path shape-rendering="crispEdges" d="M1 0h1v1h-1zM5 0h1v1h-1zM2 1h1v1h-1zM5 1h6v1h-6zM4 2h1v1h-1zM10 2h1v1h-1zM0 3h4v1h-4zM5 3h4v1h-4zM10 3h1v1h-1zM2 4h1v1h-1zM5 4h1v1h-1zM8 4h1v1h-1zM10 4h1v1h-1zM2 5h1v1h-1zM5 5h4v1h-4zM10 5h1v1h-1zM2 6h1v1h-1zM5 6h1v1h-1zM8 6h1v1h-1zM10 6h1v1h-1zM2 7h1v1h-1zM5 7h1v1h-1zM8 7h1v1h-1zM10 7h1v1h-1zM2 8h2v1h-2zM5 8h4v1h-4zM10 8h1v1h-1zM2 9h1v1h-1zM10 9h1v1h-1zM8 10h2v1h-2z"/></symbol><symbol id="u8c61" overflow="visible"><path shape-rendering="crispEdges" d="M3 0h5v1h-5zM2 1h1v1h-1zM6 1h1v1h-1zM1 2h9v1h-9zM0 3h1v1h-1zM2 3h1v1h-1zM5 3h1v1h-1zM9 3h1v1h-1zM2 4h8v1h-8zM3 5h1v1h-1zM5 5h1v1h-1zM9 5h1v1h-1zM1 6h2v1h-2zM4 6h3v1h-3zM8 6h1v1h-1zM3 7h1v1h-1zM6 7h2v1h-2zM1 8h2v1h-2zM5 8h2v1h-2zM8 8h1v1h-1zM3 9h2v1h-2zM6 9h1v1h-1zM9 9h2v1h-2zM0 10h3v1h-3zM5 10h2v1h-2z"/></symbol><symbol id="u8fde" overflow="visible"><path shape-rendering="crispEdges" d="M1 0h1v1h-1zM6 0h1v1h-1zM2 1h1v1h-1zM4 1h7v1h-7zM2 2h1v1h-1zM6 2h1v1h-1zM5 3h1v1h-1zM7 3h1v1h-1zM0 4h3v1h-3zM4 4h6v1h-6zM2 5h1v1h-1zM7 5h1v1h-1zM2 6h1v1h-1zM4 6h7v1h-7zM2 7h1v1h-1zM7 7h1v1h-1zM2 8h1v1h-1zM7 8h1v1h-1zM1 9h1v1h-1zM3 9h1v1h-1zM7 9h1v1h-1zM0 10h1v1h-1zM4 10h7v1h-7z"/></symbol><symbol id="u9664" overflow="visible"><path shape-rendering="crispEdges" d="M0 0h4v1h-4zM7 0h1v1h-1zM0 1h1v1h-1zM3 1h1v1h-1zM6 1h1v1h-1zM8 1h1v1h-1zM0 2h1v1h-1zM2 2h1v1h-1zM5 2h1v1h-1zM9 2h1v1h-1zM0 3h2v1h-2zM4 3h1v1h-1zM6 3h3v1h-3zM10 3h1v1h-1zM0 4h1v1h-1zM2 4h1v1h-1zM7 4h1v1h-1zM0 5h1v1h-1zM3 5h8v1h-8zM0 6h1v1h-1zM3 6h1v1h-1zM7 6h1v1h-1zM0 7h3v1h-3zM5 7h1v1h-1zM7 7h1v1h-1zM9 7h1v1h-1zM0 8h1v1h-1zM4 8h1v1h-1zM7 8h1v1h-1zM10 8h1v1h-1zM0 9h1v1h-1zM3 9h1v1h-1zM7 9h1v1h-1zM10 9h1v1h-1zM0 10h1v1h-1zM6 10h2v1h-2z"/></symbol></defs></svg>
<div id="frame" style="left:0;top:0;width:968px;height:666px">
<div style="left:967px;top:0px;width:1px;height:666px;background:#404040;"></div><div style="left:1px;top:665px;width:966px;height:1px;background:#808080;"></div>
<div style="left:966px;top:1px;width:1px;height:665px;background:#808080;"></div>
<div style="left:1px;top:1px;width:965px;height:1px;background:#fff;"></div><div style="left:1px;top:1px;width:1px;height:664px;background:#fff;"></div>
</div>
<div id="titlebar" style="left:4px;top:4px;width:960px;height:18px;background:#0A246A">
<svg width="17" height="15" viewBox="0 0 17 15" style="left:2px;top:2px"><defs><linearGradient id="lg" x1="0" y1="0" x2="1" y2="1"><stop offset="0" stop-color="#7fce3c"/><stop offset="1" stop-color="#2f920c"/></linearGradient></defs><g fill="url(#lg)"><ellipse cx="8.500" cy="9.600" rx="5.700" ry="4.400" transform="rotate(-14 8.500 9.600)"/><path d="M0 6C.5 3 3 .5 8.900 0V4.500C6 4.500 4 5.500 3.200 7.600H1z"/><path d="M13.500 1c1.500 1.500 2.800 3.500 2.700 5.500-.100 1.300-1.200 1.800-2.200 1.100-1-1.100-2-2.600-3-3.400 1-.700 2-2 2.500-3.200z"/></g></svg>
<span style="left:20px;top:4px;font:bold 12.140px/12px 'Liberation Mono',monospace;color:#fff;white-space:pre;text-rendering:geometricPrecision;transform:scaleX(.9608);transform-origin:0 0">Navicat for MySQL</span>
<div style="left:908px;top:2px;width:16px;height:14px;background:#D4D0C8"><div style="left:0px;top:0px;width:15px;height:1px;background:#fff;"></div><div style="left:0px;top:0px;width:1px;height:13px;background:#fff;"></div><div style="left:15px;top:0px;width:1px;height:14px;background:#404040;"></div><div style="left:0px;top:13px;width:16px;height:1px;background:#404040;"></div><div style="left:14px;top:1px;width:1px;height:12px;background:#808080;"></div><div style="left:1px;top:12px;width:14px;height:1px;background:#808080;"></div><div style="left:4px;top:9px;width:6px;height:2px;background:#000;"></div></div>
<div style="left:924px;top:2px;width:16px;height:14px;background:#D4D0C8"><div style="left:0px;top:0px;width:15px;height:1px;background:#fff;"></div><div style="left:0px;top:0px;width:1px;height:13px;background:#fff;"></div><div style="left:15px;top:0px;width:1px;height:14px;background:#404040;"></div><div style="left:0px;top:13px;width:16px;height:1px;background:#404040;"></div><div style="left:14px;top:1px;width:1px;height:12px;background:#808080;"></div><div style="left:1px;top:12px;width:14px;height:1px;background:#808080;"></div><div style="left:3px;top:2px;width:9px;height:9px;background:#000;"></div><div style="left:4px;top:4px;width:7px;height:6px;background:#D4D0C8;"></div></div>
<div style="left:942px;top:2px;width:16px;height:14px;background:#D4D0C8"><div style="left:0px;top:0px;width:15px;height:1px;background:#fff;"></div><div style="left:0px;top:0px;width:1px;height:13px;background:#fff;"></div><div style="left:15px;top:0px;width:1px;height:14px;background:#404040;"></div><div style="left:0px;top:13px;width:16px;height:1px;background:#404040;"></div><div style="left:14px;top:1px;width:1px;height:12px;background:#808080;"></div><div style="left:1px;top:12px;width:14px;height:1px;background:#808080;"></div><svg width="16" height="14" viewBox="0 0 16 14" style="left:0;top:0"><path d="M4.300 3.300l7.400 6.400M11.700 3.300l-7.400 6.400" stroke="#000" stroke-width="1.400" fill="none"/></svg></div>
</div>
<div id="menubar" style="left:4px;top:22px;width:960px;height:20px">
<span class="c " style="left:6px;top:6px;width:24px;"><svg width="24" height="12" style="left:0;top:0" fill="currentColor"><use href="#u6587" x="0"/><use href="#u4ef6" x="12"/></svg><i>文件</i></span>
<span class="c " style="left:57px;top:6px;width:24px;"><svg width="24" height="12" style="left:0;top:0" fill="currentColor"><use href="#u67e5" x="0"/><use href="#u770b" x="12"/></svg><i>查看</i></span>
<span class="c " style="left:107px;top:6px;width:36px;"><svg width="36" height="12" style="left:0;top:0" fill="currentColor"><use href="#u6536" x="0"/><use href="#u85cf" x="12"/><use href="#u5939" x="24"/></svg><i>收藏夹</i></span>
<span class="c " style="left:171px;top:6px;width:24px;"><svg width="24" height="12" style="left:0;top:0" fill="currentColor"><use href="#u5de5" x="0"/><use href="#u5177" x="12"/></svg><i>工具</i></span>
<span class="c " style="left:222px;top:6px;width:24px;"><svg width="24" height="12" style="left:0;top:0" fill="currentColor"><use href="#u7a97" x="0"/><use href="#u53e3" x="12"/></svg><i>窗口</i></span>
<span class="c " style="left:273px;top:6px;width:24px;"><svg width="24" height="12" style="left:0;top:0" fill="currentColor"><use href="#u5e2e" x="0"/><use href="#u52a9" x="12"/></svg><i>帮助</i></span>
<span class="c " style="left:903px;top:7px;width:24px;"><svg width="24" height="12" style="left:0;top:0" fill="currentColor"><use href="#u767b" x="0"/><use href="#u5f55" x="12"/></svg><i>登录</i></span>
</div>
<div id="avatar" style="left:939px;top:23px;width:25px;height:25px;background:#CAC9CE"><svg width="25" height="25" viewBox="0 0 25 25" style="left:0;top:0"><path d="M1.700 25c.5-2.400 2-3.200 5-4.200 1.800-.600 2.600-1.200 2.700-2.700C8 16.500 7 14.500 7 11.500 7 7.500 9 5.500 12.300 5.500s5.300 2 5.300 6c0 3-1 5-2.400 6.600.1 1.500.9 2.100 2.700 2.700 3 1 4.500 1.800 5 4.200z" fill="#fff"/></svg></div>
<div id="toolbar" style="left:4px;top:42px;width:960px;height:61px">
<div style="left:169px;top:4px;width:63px;height:54px;border:1px solid #316AC5;box-shadow:0 0 0 1px #E6E0D2;background:conic-gradient(#C3D4F0 25%,#EDF2FC 0 50%,#C3D4F0 0 75%,#EDF2FC 0) 0 0/2px 2px"></div>
<div style="left:154px;top:5px;width:1px;height:54px;background:#808080;"></div>
<span class="c " style="left:26px;top:44px;width:24px;"><svg width="24" height="12" style="left:0;top:0" fill="currentColor"><use href="#u8fde" x="0"/><use href="#u63a5" x="12"/></svg><i>连接</i></span>
<span class="c " style="left:95px;top:44px;width:24px;"><svg width="24" height="12" style="left:0;top:0" fill="currentColor"><use href="#u7528" x="0"/><use href="#u6237" x="12"/></svg><i>用户</i></span>
<span class="c " style="left:195px;top:44px;width:12px;"><svg width="12" height="12" style="left:0;top:0" fill="currentColor"><use href="#u8868" x="0"/></svg><i>表</i></span>
<span class="c " style="left:254px;top:44px;width:24px;"><svg width="24" height="12" style="left:0;top:0" fill="currentColor"><use href="#u89c6" x="0"/><use href="#u56fe" x="12"/></svg><i>视图</i></span>
<span class="c " style="left:319px;top:44px;width:24px;"><svg width="24" height="12" style="left:0;top:0" fill="currentColor"><use href="#u51fd" x="0"/><use href="#u6570" x="12"/></svg><i>函数</i></span>
<span class="c " style="left:384px;top:44px;width:24px;"><svg width="24" height="12" style="left:0;top:0" fill="currentColor"><use href="#u4e8b" x="0"/><use href="#u4ef6" x="12"/></svg><i>事件</i></span>
<span class="c " style="left:449px;top:44px;width:24px;"><svg width="24" height="12" style="left:0;top:0" fill="currentColor"><use href="#u67e5" x="0"/><use href="#u8be2" x="12"/></svg><i>查询</i></span>
<span class="c " style="left:514px;top:44px;width:24px;"><svg width="24" height="12" style="left:0;top:0" fill="currentColor"><use href="#u62a5" x="0"/><use href="#u8868" x="12"/></svg><i>报表</i></span>
<span class="c " style="left:579px;top:44px;width:24px;"><svg width="24" height="12" style="left:0;top:0" fill="currentColor"><use href="#u5907" x="0"/><use href="#u4efd" x="12"/></svg><i>备份</i></span>
<span class="c " style="left:644px;top:44px;width:24px;"><svg width="24" height="12" style="left:0;top:0" fill="currentColor"><use href="#u8ba1" x="0"/><use href="#u5212" x="12"/></svg><i>计划</i></span>
<span class="c " style="left:709px;top:44px;width:24px;"><svg width="24" height="12" style="left:0;top:0" fill="currentColor"><use href="#u6a21" x="0"/><use href="#u578b" x="12"/></svg><i>模型</i></span>
</div>
<div style="left:4px;top:103px;width:960px;height:1px;background:#808080;"></div>
<div id="tbicons" style="left:0;top:0;width:0;height:0">
<svg width="34" height="32" viewBox="0 0 34 32" style="left:25px;top:50px" ><g shape-rendering="crispEdges"><rect x="19" y="0" width="14" height="2" fill="#636866"/><rect x="31" y="0" width="2" height="28" fill="#636866"/><rect x="15" y="4" width="14" height="28" fill="#636866"/><rect x="17" y="6" width="10" height="2" fill="#fff"/><rect x="17" y="10" width="2" height="2" fill="#fff"/><rect x="3" y="12" width="2" height="5" fill="#000"/><rect x="9" y="12" width="2" height="5" fill="#000"/><rect x="6" y="25" width="2" height="7" fill="#000"/></g><circle cx="21.900" cy="27.100" r="3" fill="#fff"/><path d="M1 16h12v5c0 3-2 5.200-5 5.200H6c-3 0-5-2.200-5-5.200z" fill="#000"/></svg>
<svg width="6" height="3" viewBox="0 0 6 3" style="left:72px;top:73px" ><path d="M0 0h6L3 3z" fill="#000"/></svg>
<svg width="32" height="33" viewBox="0 0 32 33" style="left:95px;top:49px" ><path d="M0 33C.5 24 6 17 16 17s15.500 7 16 16z" fill="#505050"/><path d="M12.600 17h6.600L16 22.600z" fill="#fff"/><circle cx="15.900" cy="8.700" r="8" fill="#E6C580"/></svg>
<svg width="32" height="32" viewBox="0 0 32 32" style="left:189px;top:50px" ><g shape-rendering="crispEdges"><rect width="32" height="4" fill="#4A84C4"/><rect y="4" width="32" height="28" fill="#fff"/><rect x="1" y="7" width="30" height="1" fill="#a09c9c"/><rect x="1" y="11" width="30" height="1" fill="#a09c9c"/><rect x="1" y="15" width="30" height="1" fill="#a09c9c"/><rect x="1" y="19" width="30" height="1" fill="#a09c9c"/><rect x="1" y="23" width="30" height="1" fill="#a09c9c"/><rect x="1" y="27" width="30" height="1" fill="#a09c9c"/><rect x="6" y="4" width="1" height="28" fill="#a09c9c"/><rect x="19" y="4" width="1" height="28" fill="#a09c9c"/><rect x="0" y="4" width="1" height="28" fill="#5e5e5e"/><rect x="31" y="4" width="1" height="28" fill="#5e5e5e"/><rect x="0" y="31" width="32" height="1" fill="#5e5e5e"/></g></svg>
<svg width="24" height="24" viewBox="0 0 24 24" style="left:254px;top:50px" ><g shape-rendering="crispEdges"><rect width="24" height="4" fill="#4A84C4"/><rect y="4" width="24" height="20" fill="#fff"/><rect x="1" y="7" width="22" height="1" fill="#a09c9c"/><rect x="1" y="11" width="22" height="1" fill="#a09c9c"/><rect x="1" y="15" width="22" height="1" fill="#a09c9c"/><rect x="1" y="19" width="22" height="1" fill="#a09c9c"/><rect x="7" y="4" width="1" height="20" fill="#a09c9c"/><rect x="15" y="4" width="1" height="20" fill="#a09c9c"/><rect x="0" y="4" width="1" height="20" fill="#5e5e5e"/><rect x="23" y="4" width="1" height="20" fill="#5e5e5e"/><rect x="0" y="23" width="24" height="1" fill="#5e5e5e"/></g></svg>
<svg width="31" height="12" viewBox="0 0 31 12" style="left:256px;top:71px" ><path d="M3.500 1.200h24v3h-24z" fill="#D4D0C8"/><circle cx="8.900" cy="5.900" r="5.800" fill="#D4D0C8"/><circle cx="22" cy="5.900" r="5.800" fill="#D4D0C8"/><rect x="1" y="3" width="4.500" height="2" fill="#000"/><rect x="25.500" y="3" width="4.500" height="2" fill="#000"/><rect x="13" y="4.300" width="5" height="1.700" fill="#000"/><circle cx="8.900" cy="5.900" r="3.900" fill="#fff" stroke="#000" stroke-width="2.200"/><circle cx="22" cy="5.900" r="3.900" fill="#fff" stroke="#000" stroke-width="2.200"/></svg>
<svg width="16" height="19" viewBox="0 0 16 19" style="left:319px;top:50px" ><path d="M0 2.500C0 1.100 3.600 0 8 0s8 1.100 8 2.500v14C16 17.900 12.400 19 8 19s-8-1.100-8-2.500z" fill="#5BA044"/><path d="M0 3c2 2.200 14 2.200 16 0M0 8c2 2.200 14 2.200 16 0M0 13c2 2.200 14 2.200 16 0" fill="none" stroke="#e4f0dc" stroke-width="1"/></svg>
<svg width="28" height="23" viewBox="0 0 28 23" style="left:324px;top:60px" ><path d="M16 4.400C16.200 2.600 14.200 2 12.800 2.700 11 3.600 10.300 6 9.700 9L7.700 17.500C7.100 20 6.300 21.600 4.300 21.600 3.100 21.600 2.500 21 2.500 20.400" fill="none" stroke="#D4D0C8" stroke-width="4.500" stroke-linecap="round"/><path d="M16 4.400C16.200 2.600 14.200 2 12.800 2.700 11 3.600 10.300 6 9.700 9L7.700 17.500C7.100 20 6.300 21.600 4.300 21.600 3.100 21.600 2.500 21 2.500 20.400" fill="none" stroke="#333" stroke-width="1.900" stroke-linecap="round"/><path d="M6.500 8.600h7" stroke="#333" stroke-width="1.200"/><g fill="none" stroke="#444" stroke-width="1.100" stroke-linecap="round"><path d="M18 7.300C14.500 10.500 12.300 16 13.600 20.800"/><path d="M25.300 7.300C28 11 26.500 17 21.200 21"/><path d="M16.300 12.500c1.200-.300 1.900.400 2.500 2.700.6 2.300 1.300 3 2.600 2.600M23 12.400c-1.300-.200-2.300.800-3.800 2.800-1.500 2-2.400 2.900-3.700 2.600"/></g></svg>
<svg width="23" height="29" viewBox="0 0 23 29" style="left:384px;top:50px" ><path d="M0 3.200C0 1.400 5.100 0 11.500 0S23 1.400 23 3.200v22.600C23 27.600 17.900 29 11.500 29S0 27.600 0 25.800z" fill="#5C9F3B"/><path d="M0 3c3 2.100 20 2.100 23 0M0 11.100c3 2.300 20 2.300 23 0M0 19.700c3 2.300 20 2.300 23 0" fill="none" stroke="#D9E6CF" stroke-width="1"/></svg>
<svg width="18" height="18" viewBox="0 0 18 18" style="left:399px;top:65px" ><circle cx="9.200" cy="8.900" r="9.300" fill="#D4D0C8"/><circle cx="9.200" cy="8.900" r="7.700" fill="#fff" stroke="#333" stroke-width="1.100"/><path d="M8.500 4.300V9.500h3.700" fill="none" stroke="#333" stroke-width="1.400"/></svg>
<svg width="24" height="24" viewBox="0 0 24 24" style="left:449px;top:50px" ><g shape-rendering="crispEdges"><rect width="24" height="4" fill="#E0603A"/><rect y="4" width="24" height="20" fill="#fff"/><rect x="1" y="7" width="22" height="1" fill="#a09c9c"/><rect x="1" y="11" width="22" height="1" fill="#a09c9c"/><rect x="1" y="15" width="22" height="1" fill="#a09c9c"/><rect x="1" y="19" width="22" height="1" fill="#a09c9c"/><rect x="6" y="4" width="1" height="20" fill="#a09c9c"/><rect x="14" y="4" width="1" height="20" fill="#a09c9c"/><rect x="0" y="4" width="1" height="20" fill="#5e5e5e"/><rect x="23" y="4" width="1" height="20" fill="#5e5e5e"/><rect x="0" y="23" width="24" height="1" fill="#5e5e5e"/></g></svg>
<svg width="26" height="26" viewBox="0 0 26 26" style="left:456px;top:57px" shape-rendering="crispEdges"><rect width="26" height="26" fill="#E2DFD8"/></svg>
<svg width="24" height="24" viewBox="0 0 24 24" style="left:457px;top:58px" ><g shape-rendering="crispEdges"><rect width="24" height="4" fill="#4A84C4"/><rect y="4" width="24" height="20" fill="#fff"/><rect x="1" y="7" width="22" height="1" fill="#a09c9c"/><rect x="1" y="11" width="22" height="1" fill="#a09c9c"/><rect x="1" y="15" width="22" height="1" fill="#a09c9c"/><rect x="1" y="19" width="22" height="1" fill="#a09c9c"/><rect x="7" y="4" width="1" height="20" fill="#a09c9c"/><rect x="15" y="4" width="1" height="20" fill="#a09c9c"/><rect x="0" y="4" width="1" height="20" fill="#5e5e5e"/><rect x="23" y="4" width="1" height="20" fill="#5e5e5e"/><rect x="0" y="23" width="24" height="1" fill="#5e5e5e"/></g></svg>
<svg width="24" height="32" viewBox="0 0 24 32" style="left:518px;top:50px" ><path d="M.5 .5H16L23.500 8V31.500H.5z" fill="#fff" stroke="#666" stroke-width="1.100"/><path d="M16 .5V8h7.500" fill="#fff" stroke="#666" stroke-width="1.100"/><g shape-rendering="crispEdges" fill="#686868"><rect x="2" y="3" width="8" height="1"/><rect x="2" y="5" width="12" height="1"/><rect x="2" y="7" width="12" height="1"/><rect x="2" y="9" width="4" height="1"/><rect x="8" y="9" width="6" height="1"/><rect x="2" y="11" width="20" height="1"/><rect x="2" y="13" width="14" height="1"/><rect x="2" y="15" width="20" height="1"/><rect x="2" y="22" width="4" height="6" fill="#4A80BE"/><rect x="7" y="18" width="4" height="10" fill="#FF9A40"/><rect x="12" y="26" width="4" height="2" fill="#4A80BE"/><rect x="17" y="20" width="4" height="8" fill="#4A80BE"/></g></svg>
<svg width="32" height="21" viewBox="0 0 32 21" style="left:579px;top:55px" ><rect x="0" y="0" width="32" height="21" rx="1.800" fill="#5A5E5C"/><rect x="2" y="2" width="28" height="12" fill="#fff"/><circle cx="8.900" cy="7.900" r="5.800" fill="#000"/><circle cx="8.900" cy="7.900" r="2.800" fill="#b4b4b4"/><circle cx="8.900" cy="7.900" r="1.100" fill="#fff"/><circle cx="22.900" cy="7.900" r="3.300" fill="#c4c4c4" stroke="#000" stroke-width="1.100"/><circle cx="22.900" cy="7.900" r="1.200" fill="#fff"/><path d="M25.300 5.200L28.900 13.200M3.200 8.500L2.300 13.500" stroke="#000" stroke-width="1.100" fill="none"/><path d="M5 21L6.700 15.900H25.400L27.200 21" fill="none" stroke="#fff" stroke-width="1"/><g fill="#fff"><circle cx="10.400" cy="19.300" r=".7"/><circle cx="13.400" cy="19.300" r=".7"/><circle cx="18.500" cy="19.300" r=".7"/><circle cx="21.500" cy="19.300" r=".7"/></g></svg>
<svg width="32" height="32" viewBox="0 0 32 32" style="left:644px;top:50px" ><rect x=".5" y=".5" width="31" height="31" fill="#fff" stroke="#555"/><rect width="32" height="10" fill="#CC3A3A"/><g fill="#fff"><rect x="7" y="0" width="2" height="6"/><circle cx="8" cy="6.500" r="2.100"/><rect x="23" y="0" width="2" height="6"/><circle cx="24" cy="6.500" r="2.100"/></g><g shape-rendering="crispEdges" fill="#999"><rect x="4" y="12" width="1" height="17"/><rect x="8" y="12" width="1" height="17"/><rect x="12" y="12" width="1" height="17"/><rect x="16" y="12" width="1" height="17"/><rect x="20" y="12" width="1" height="17"/><rect x="24" y="12" width="1" height="17"/><rect x="28" y="12" width="1" height="17"/><rect x="4" y="12" width="25" height="1"/><rect x="4" y="16" width="25" height="1"/><rect x="4" y="20" width="25" height="1"/><rect x="4" y="24" width="25" height="1"/><rect x="4" y="28" width="25" height="1"/></g><circle cx="23.300" cy="22.400" r="8.600" fill="#fff"/><circle cx="23.300" cy="22.400" r="7.500" fill="#fff" stroke="#555" stroke-width="1"/><path d="M22.600 18v5.600h3.600" fill="none" stroke="#333" stroke-width="1.300"/></svg>
<svg width="33" height="32" viewBox="0 0 33 32" style="left:709px;top:50px" ><path d="M.5 .5H16L23.500 8V31.500H.5z" fill="#fff" stroke="#555" stroke-width="1.100"/><path d="M16 .5V8h7.500" fill="#fff" stroke="#555" stroke-width="1.100"/><path d="M8 8v16M13 15.800h3" stroke="#999" stroke-width="1" fill="none"/><g fill="#9C9CA0"><rect x="5" y="4" width="6" height="4"/><rect x="16" y="13" width="4" height="6"/><rect x="5" y="24" width="6" height="4"/></g><path d="M7.900 10.900l4.900 4.900-4.900 4.900-4.900-4.900z" fill="#4682C0"/><rect x="26" y="6" width="4" height="22" fill="#C9A46C"/><path d="M12.400 32H31.900V11.900z M22.300 27.800h5.700v-6z" fill="#FF9C45" fill-rule="evenodd"/></svg>
</div>
<div id="tree" style="left:4px;top:104px;width:200px;height:537px;background:#fff">
<svg width="9" height="9" style="left:2px;top:5px"><use href="#mi"/></svg>
<svg width="16" height="15" style="left:18px;top:1px"><use href="#cn"/></svg>
<span class="m " style="left:40px;top:4px;">1</span>
<svg width="9" height="9" style="left:16px;top:23px"><use href="#pl"/></svg>
<svg width="12" height="14" style="left:34px;top:20px"><use href="#cg"/></svg>
<span class="m " style="left:54px;top:22px;">cai61</span>
<svg width="9" height="9" style="left:16px;top:41px"><use href="#mi"/></svg>
<svg width="12" height="14" style="left:34px;top:38px"><use href="#cg"/></svg>
<span class="m " style="left:54px;top:40px;">information_schema</span>
<div style="left:0px;top:54px;width:200px;height:18px;background:#0A246A;"></div>
<svg width="9" height="9" style="left:30px;top:59px"><use href="#pl"/></svg>
<svg width="16" height="15" style="left:46px;top:55px"><use href="#tb"/></svg>
<span class="c w" style="left:68px;top:58px;width:12px;"><svg width="12" height="12" style="left:0;top:0" fill="currentColor"><use href="#u8868" x="0"/></svg><i>表</i></span>
<svg width="16" height="7" viewBox="0 0 16 7" style="left:46px;top:78px" ><path d="M.3 1.300h15.400" stroke="#111" stroke-width="1"/><circle cx="4.600" cy="3.700" r="2.400" fill="#fff" stroke="#111" stroke-width="1.300"/><circle cx="11.400" cy="3.700" r="2.400" fill="#fff" stroke="#111" stroke-width="1.300"/><path d="M7 3.200c.7-.6 1.300-.6 2 0" stroke="#111" fill="none"/></svg>
<span class="c " style="left:68px;top:76px;width:24px;"><svg width="24" height="12" style="left:0;top:0" fill="currentColor"><use href="#u89c6" x="0"/><use href="#u56fe" x="12"/></svg><i>视图</i></span>
<svg width="9" height="9" style="left:30px;top:95px"><use href="#pl"/></svg>
<svg width="16" height="15" viewBox="0 0 16 15" style="left:46px;top:92px" ><g fill="none" stroke="#3A6DB4" stroke-linecap="round"><path d="M10 2.600C10 1.400 8.600 1 7.700 1.600 6.600 2.300 6.200 4 5.800 6L4.600 11C4.200 12.600 3.600 13.600 2.400 13.600 1.600 13.600 1.200 13.200 1.200 12.800" stroke-width="1.300"/><path d="M3.800 5.600h4.600" stroke-width="1"/><path d="M11.700 4.500C9.700 7 9.200 10 10 13M13.600 4.500C15.600 7 14.500 10.500 12 13" stroke-width=".9"/></g></svg>
<span class="c " style="left:68px;top:94px;width:24px;"><svg width="24" height="12" style="left:0;top:0" fill="currentColor"><use href="#u51fd" x="0"/><use href="#u6570" x="12"/></svg><i>函数</i></span>
<svg width="17" height="14" viewBox="0 0 17 14" style="left:46px;top:110px" ><path d="M0 1.500C0 .7 2 0 4.500 0S9 .7 9 1.500v8.500c0 .8-2 1.500-4.500 1.500S0 10.800 0 10z" fill="#5BA044"/><path d="M0 2.500c1.500 1.300 7.500 1.300 9 0M0 6c1.500 1.300 7.500 1.300 9 0" stroke="#dcecd2" fill="none" stroke-width=".9"/><circle cx="10.300" cy="7.800" r="5.300" fill="#fff" stroke="#555" stroke-width="1"/><path d="M10.300 4.500v3.700h2.500" stroke="#555" fill="none"/></svg>
<span class="c " style="left:68px;top:112px;width:24px;"><svg width="24" height="12" style="left:0;top:0" fill="currentColor"><use href="#u4e8b" x="0"/><use href="#u4ef6" x="12"/></svg><i>事件</i></span>
<svg width="9" height="9" style="left:30px;top:131px"><use href="#pl"/></svg>
<svg width="16" height="15" viewBox="0 0 16 15" style="left:46px;top:127px" ><g shape-rendering="crispEdges"><rect width="10" height="3" fill="#E0603A"/><rect y="3" width="10" height="8" fill="#777"/><rect x="1" y="3" width="2" height="3" fill="#fff"/><rect x="4" y="3" width="5" height="3" fill="#fff"/><rect x="1" y="7" width="2" height="3" fill="#fff"/><rect x="4" y="7" width="5" height="3" fill="#fff"/><rect x="5" y="4" width="11" height="3" fill="#4A84C4"/><rect x="5" y="7" width="11" height="8" fill="#777"/><rect x="6" y="7" width="4" height="3" fill="#fff"/><rect x="11" y="7" width="4" height="3" fill="#fff"/><rect x="6" y="11" width="4" height="3" fill="#fff"/><rect x="11" y="11" width="4" height="3" fill="#fff"/></g></svg>
<span class="c " style="left:68px;top:130px;width:24px;"><svg width="24" height="12" style="left:0;top:0" fill="currentColor"><use href="#u67e5" x="0"/><use href="#u8be2" x="12"/></svg><i>查询</i></span>
<svg width="9" height="9" style="left:30px;top:149px"><use href="#pl"/></svg>
<svg width="12" height="15" viewBox="0 0 12 15" style="left:48px;top:145px" ><path d="M.5 .5H8L11.500 4V14.500H.5z" fill="#fff" stroke="#666"/><path d="M8 .5V4h3.500" fill="none" stroke="#666"/><g shape-rendering="crispEdges"><rect x="2" y="3" width="4" height="1" fill="#888"/><rect x="2" y="5" width="4" height="1" fill="#888"/><rect x="2" y="7" width="8" height="1" fill="#888"/><rect x="2" y="11" width="2" height="2" fill="#4A84C4"/><rect x="5" y="9" width="2" height="4" fill="#F79A3E"/><rect x="8" y="10" width="2" height="3" fill="#4A84C4"/></g></svg>
<span class="c " style="left:68px;top:148px;width:24px;"><svg width="24" height="12" style="left:0;top:0" fill="currentColor"><use href="#u62a5" x="0"/><use href="#u8868" x="12"/></svg><i>报表</i></span>
<svg width="9" height="9" style="left:30px;top:167px"><use href="#pl"/></svg>
<svg width="16" height="13" viewBox="0 0 16 13" style="left:46px;top:164px" ><rect x=".5" y=".5" width="15" height="12" rx="1.500" fill="#fff" stroke="#555"/><rect x="1" y="8.500" width="14" height="4" fill="#555"/><circle cx="4.800" cy="4.600" r="2.300" fill="#aaa" stroke="#000" stroke-width="1.600"/><circle cx="11.300" cy="4.600" r="1.800" fill="#ccc" stroke="#333" stroke-width="1"/><rect x="4" y="10" width="8" height="1.500" fill="#ddd"/></svg>
<span class="c " style="left:68px;top:166px;width:24px;"><svg width="24" height="12" style="left:0;top:0" fill="currentColor"><use href="#u5907" x="0"/><use href="#u4efd" x="12"/></svg><i>备份</i></span>
<svg width="12" height="14" style="left:34px;top:182px"><use href="#cy"/></svg>
<span class="m " style="left:54px;top:184px;">mysql</span>
<svg width="12" height="14" style="left:34px;top:200px"><use href="#cy"/></svg>
<span class="m " style="left:54px;top:202px;">performance_schema</span>
<svg width="12" height="14" style="left:34px;top:218px"><use href="#cy"/></svg>
<span class="m " style="left:54px;top:220px;">test</span>
</div>
<div id="tabs" style="left:204px;top:104px;width:760px;height:26px">
<div style="left:74px;top:0px;width:686px;height:25px;background:#F0EDE8;"></div>
<div style="left:73px;top:0px;width:1px;height:26px;background:#A5A08C;"></div><div style="left:73px;top:25px;width:687px;height:1px;background:#A5A08C;"></div>
<div style="left:74px;top:0px;width:17px;height:25px;background:#fff;"></div><div style="left:91px;top:0px;width:1px;height:25px;background:#A5A08C;"></div>
<span class="c " style="left:26px;top:7px;width:24px;"><svg width="24" height="12" style="left:0;top:0" fill="currentColor"><use href="#u5bf9" x="0"/><use href="#u8c61" x="12"/></svg><i>对象</i></span>
<svg width="10" height="14" viewBox="0 0 10 14" style="left:78px;top:6px" ><path d="M0 7L6.700 0 9 2.500 4.500 7 9 11.500 6.700 14z" fill="#9C9CA4"/></svg>
<span class="m g" style="left:93px;top:7px;">.</span>
<div style="left:106px;top:4px;width:1px;height:18px;background:#A5A08C;"></div>
<svg width="16" height="15" style="left:111px;top:5px"><use href="#tb"/></svg>
<span class="m " style="left:130px;top:7px;color:#777;-webkit-text-stroke:0">caipiao_caipiaoti...</span>
<div style="left:256px;top:4px;width:1px;height:18px;background:#A5A08C;"></div>
<svg width="16" height="15" style="left:261px;top:5px"><use href="#tb"/></svg>
<span class="m " style="left:280px;top:7px;color:#777;-webkit-text-stroke:0">caipiao_caipiao @...</span>
<div style="left:406px;top:4px;width:1px;height:18px;background:#A5A08C;"></div>
<svg width="16" height="15" style="left:411px;top:5px"><use href="#tb"/></svg>
<span class="m " style="left:430px;top:7px;color:#777;-webkit-text-stroke:0">caipiao_bbbetreco...</span>
<div style="left:556px;top:4px;width:1px;height:18px;background:#A5A08C;"></div>
<svg width="16" height="15" style="left:561px;top:5px"><use href="#tb"/></svg>
<span class="m " style="left:580px;top:7px;color:#777;-webkit-text-stroke:0">caipiao_banklist ...</span>
<div style="left:706px;top:0px;width:1px;height:25px;background:#A5A08C;"></div><div style="left:707px;top:0px;width:17px;height:25px;background:#fff;"></div><div style="left:724px;top:0px;width:1px;height:25px;background:#A5A08C;"></div><div style="left:725px;top:0px;width:35px;height:25px;background:#fff;"></div>
<svg width="12" height="14" viewBox="0 0 12 14" style="left:710px;top:6px" ><path d="M2 2.500L4.500 0 11 7 4.500 14 2 11.500 6.500 7z" fill="#fff" stroke="#8C8CA0" stroke-width=".9"/></svg>
<svg width="18" height="16" viewBox="0 0 18 16" style="left:733px;top:5px" ><g shape-rendering="crispEdges" transform="translate(1 0)"><rect x="0" y="0" width="8" height="2" fill="#E0603A"/><rect x="0" y="2" width="8" height="5" fill="#777"/><rect x="1" y="3" width="2" height="1" fill="#fff"/><rect x="4" y="3" width="3" height="1" fill="#fff"/><rect x="1" y="5" width="2" height="1" fill="#fff"/><rect x="4" y="5" width="3" height="1" fill="#fff"/><rect x="3" y="3" width="8" height="2" fill="#4A84C4"/><rect x="3" y="5" width="8" height="5" fill="#777"/><rect x="4" y="6" width="2" height="1" fill="#fff"/><rect x="7" y="6" width="3" height="1" fill="#fff"/><rect x="4" y="8" width="2" height="1" fill="#fff"/></g><circle cx="11.600" cy="10.500" r="5.600" fill="#5CBB1E"/><path d="M11.600 7.300v6.400M8.400 10.500h6.400" stroke="#fff" stroke-width="1.500"/></svg>
</div>
<div id="objbar" style="left:204px;top:130px;width:760px;height:29px">
<svg width="16" height="16" viewBox="0 0 16 16" style="left:8px;top:9px" ><g shape-rendering="crispEdges"><rect x="0" y="0" width="11" height="2" fill="#9DB1C9"/><rect x="0" y="2" width="11" height="6" fill="#ABABAB"/><rect x="1" y="3" width="4" height="2" fill="#E6E4E0"/><rect x="6" y="3" width="4" height="2" fill="#E6E4E0"/><rect x="1" y="6" width="4" height="1" fill="#E6E4E0"/><rect x="6" y="6" width="4" height="1" fill="#E6E4E0"/></g><path d="M1.500 6H9l1 1.500h6V16H1.500z" fill="#E6DCCE"/><path d="M2 9.500h10l3.500 6" fill="none" stroke="#F3EDE5" stroke-width="1"/></svg>
<span class="c g" style="left:28px;top:11px;width:36px;"><svg width="36" height="12" style="left:0;top:0" fill="currentColor"><use href="#u6253" x="0"/><use href="#u5f00" x="12"/><use href="#u8868" x="24"/></svg><i>打开表</i></span>
<svg width="16" height="17" viewBox="0 0 16 17" style="left:73px;top:9px" ><g shape-rendering="crispEdges"><rect x="0" y="0" width="11" height="2" fill="#9DB1C9"/><rect x="0" y="2" width="11" height="6" fill="#ABABAB"/><rect x="1" y="3" width="4" height="2" fill="#E6E4E0"/><rect x="6" y="3" width="4" height="2" fill="#E6E4E0"/><rect x="1" y="6" width="4" height="1" fill="#E6E4E0"/><rect x="6" y="6" width="4" height="1" fill="#E6E4E0"/></g><path d="M5.100 11.700L7.900 14.500 15.600 6.800 12.800 4z" fill="#B2B2B2"/><path d="M6.500 13.100L14.200 5.400" stroke="#DADADA" stroke-width="1"/><path d="M4.200 15.400L5.100 11.700 7.900 14.500z" fill="#8a8a8a"/><path d="M12.800 4l1.200-1.200a1.980 1.980 0 0 1 2.800 2.800L15.600 6.800z" fill="#8e8e8e"/></svg>
<span class="c g" style="left:93px;top:11px;width:36px;"><svg width="36" height="12" style="left:0;top:0" fill="currentColor"><use href="#u8bbe" x="0"/><use href="#u8ba1" x="12"/><use href="#u8868" x="24"/></svg><i>设计表</i></span>
<svg width="16" height="16" viewBox="0 0 16 16" style="left:138px;top:9px" ><g shape-rendering="crispEdges" opacity="1"><rect x="0" y="0" width="11" height="2" fill="#4A84C4"/><rect x="0" y="2" width="11" height="6" fill="#666"/><rect x="1" y="3" width="4" height="2" fill="#fff"/><rect x="6" y="3" width="4" height="2" fill="#fff"/><rect x="1" y="6" width="4" height="1" fill="#fff"/><rect x="6" y="6" width="4" height="1" fill="#fff"/></g><circle cx="9.600" cy="9.500" r="6.400" fill="#58BA1E"/><path d="M9.600 5.500v8M5.600 9.500h8" stroke="#fff" stroke-width="2"/></svg>
<span class="c " style="left:158px;top:11px;width:36px;"><svg width="36" height="12" style="left:0;top:0" fill="currentColor"><use href="#u65b0" x="0"/><use href="#u5efa" x="12"/><use href="#u8868" x="24"/></svg><i>新建表</i></span>
<svg width="16" height="16" viewBox="0 0 16 16" style="left:203px;top:9px" ><g shape-rendering="crispEdges"><rect x="0" y="0" width="11" height="2" fill="#9DB1C9"/><rect x="0" y="2" width="11" height="6" fill="#ABABAB"/><rect x="1" y="3" width="4" height="2" fill="#E6E4E0"/><rect x="6" y="3" width="4" height="2" fill="#E6E4E0"/><rect x="1" y="6" width="4" height="1" fill="#E6E4E0"/><rect x="6" y="6" width="4" height="1" fill="#E6E4E0"/></g><circle cx="9.600" cy="9.500" r="6.400" fill="#D9ABAB"/><path d="M5.600 9.500h8" stroke="#f4ecec" stroke-width="2"/></svg>
<span class="c g" style="left:223px;top:11px;width:36px;"><svg width="36" height="12" style="left:0;top:0" fill="currentColor"><use href="#u5220" x="0"/><use href="#u9664" x="12"/><use href="#u8868" x="24"/></svg><i>删除表</i></span>
<svg width="17" height="16" viewBox="0 0 17 16" style="left:268px;top:9px" ><g shape-rendering="crispEdges"><rect x="0" y="0" width="11" height="16" fill="#6c6c6c"/><rect x="1" y="2" width="9" height="13" fill="#fff"/><rect x="0" y="0" width="11" height="2" fill="#4A84C4"/><rect x="4" y="2" width="1" height="13" fill="#bbb"/><rect x="1" y="5" width="9" height="1" fill="#bbb"/><rect x="1" y="8" width="9" height="1" fill="#bbb"/><rect x="1" y="11" width="9" height="1" fill="#bbb"/></g><path d="M6.600 7.800L13 2.200V5.400H16.200V10.200H13V13.400z" fill="#4DB31C"/></svg>
<span class="c " style="left:288px;top:11px;width:48px;"><svg width="48" height="12" style="left:0;top:0" fill="currentColor"><use href="#u5bfc" x="0"/><use href="#u5165" x="12"/><use href="#u5411" x="24"/><use href="#u5bfc" x="36"/></svg><i>导入向导</i></span>
<svg width="17" height="16" viewBox="0 0 17 16" style="left:345px;top:9px" ><g shape-rendering="crispEdges"><rect x="0" y="0" width="11" height="16" fill="#6c6c6c"/><rect x="1" y="2" width="9" height="13" fill="#fff"/><rect x="0" y="0" width="11" height="2" fill="#4A84C4"/><rect x="4" y="2" width="1" height="13" fill="#bbb"/><rect x="1" y="5" width="9" height="1" fill="#bbb"/><rect x="1" y="8" width="9" height="1" fill="#bbb"/><rect x="1" y="11" width="9" height="1" fill="#bbb"/></g><path d="M16 7.800L10 2.200V5.400H7V10.200H10V13.400z" fill="#FF7A14"/></svg>
<span class="c " style="left:365px;top:11px;width:48px;"><svg width="48" height="12" style="left:0;top:0" fill="currentColor"><use href="#u5bfc" x="0"/><use href="#u51fa" x="12"/><use href="#u5411" x="24"/><use href="#u5bfc" x="36"/></svg><i>导出向导</i></span>
<svg width="16" height="17" viewBox="0 0 16 17" style="left:735px;top:9px" ><path d="M10.600 10.600l3.700 3.700" stroke="#5A5E5C" stroke-width="3.600"/><circle cx="6" cy="6" r="5.500" fill="#fff" stroke="#4A86C8" stroke-width="1.100"/></svg>
</div>
<div id="list" style="left:206px;top:159px;width:758px;height:482px;background:#fff">
<svg width="16" height="15" style="left:1px;top:1px"><use href="#tb"/></svg><span class="m " style="left:19px;top:4px;">CHARACTER_SETS</span>
<svg width="16" height="15" style="left:1px;top:18px"><use href="#tb"/></svg><span class="m " style="left:19px;top:21px;">COLLATION_CHARACTER_SET_APPLICABILITY</span>
<svg width="16" height="15" style="left:1px;top:35px"><use href="#tb"/></svg><span class="m " style="left:19px;top:38px;">COLLATIONS</span>
<svg width="16" height="15" style="left:1px;top:52px"><use href="#tb"/></svg><span class="m " style="left:19px;top:55px;">COLUMN_PRIVILEGES</span>
<svg width="16" height="15" style="left:1px;top:69px"><use href="#tb"/></svg><span class="m " style="left:19px;top:72px;">COLUMNS</span>
<svg width="16" height="15" style="left:1px;top:86px"><use href="#tb"/></svg><span class="m " style="left:19px;top:89px;">ENGINES</span>
<svg width="16" height="15" style="left:1px;top:103px"><use href="#tb"/></svg><span class="m " style="left:19px;top:106px;">EVENTS</span>
<svg width="16" height="15" style="left:1px;top:120px"><use href="#tb"/></svg><span class="m " style="left:19px;top:123px;">FILES</span>
<svg width="16" height="15" style="left:1px;top:137px"><use href="#tb"/></svg><span class="m " style="left:19px;top:140px;">GLOBAL_STATUS</span>
<svg width="16" height="15" style="left:1px;top:154px"><use href="#tb"/></svg><span class="m " style="left:19px;top:157px;">GLOBAL_VARIABLES</span>
<svg width="16" height="15" style="left:1px;top:171px"><use href="#tb"/></svg><span class="m " style="left:19px;top:174px;">INNODB_BUFFER_PAGE</span>
<svg width="16" height="15" style="left:1px;top:188px"><use href="#tb"/></svg><span class="m " style="left:19px;top:191px;">INNODB_BUFFER_PAGE_LRU</span>
<svg width="16" height="15" style="left:1px;top:205px"><use href="#tb"/></svg><span class="m " style="left:19px;top:208px;">INNODB_BUFFER_POOL_STATS</span>
<svg width="16" height="15" style="left:1px;top:222px"><use href="#tb"/></svg><span class="m " style="left:19px;top:225px;">INNODB_CMP</span>
<svg width="16" height="15" style="left:1px;top:239px"><use href="#tb"/></svg><span class="m " style="left:19px;top:242px;">INNODB_CMP_RESET</span>
<svg width="16" height="15" style="left:1px;top:256px"><use href="#tb"/></svg><span class="m " style="left:19px;top:259px;">INNODB_CMPMEM</span>
<svg width="16" height="15" style="left:1px;top:273px"><use href="#tb"/></svg><span class="m " style="left:19px;top:276px;">INNODB_CMPMEM_RESET</span>
<svg width="16" height="15" style="left:1px;top:290px"><use href="#tb"/></svg><span class="m " style="left:19px;top:293px;">INNODB_LOCK_WAITS</span>
<svg width="16" height="15" style="left:1px;top:307px"><use href="#tb"/></svg><span class="m " style="left:19px;top:310px;">INNODB_LOCKS</span>
<svg width="16" height="15" style="left:1px;top:324px"><use href="#tb"/></svg><span class="m " style="left:19px;top:327px;">INNODB_TRX</span>
<svg width="16" height="15" style="left:1px;top:341px"><use href="#tb"/></svg><span class="m " style="left:19px;top:344px;">KEY_COLUMN_USAGE</span>
<svg width="16" height="15" style="left:1px;top:358px"><use href="#tb"/></svg><span class="m " style="left:19px;top:361px;">PARAMETERS</span>
<svg width="16" height="15" style="left:1px;top:375px"><use href="#tb"/></svg><span class="m " style="left:19px;top:378px;">PARTITIONS</span>
<svg width="16" height="15" style="left:1px;top:392px"><use href="#tb"/></svg><span class="m " style="left:19px;top:395px;">PLUGINS</span>
<svg width="16" height="15" style="left:1px;top:409px"><use href="#tb"/></svg><span class="m " style="left:19px;top:412px;">PROCESSLIST</span>
<svg width="16" height="15" style="left:1px;top:426px"><use href="#tb"/></svg><span class="m " style="left:19px;top:429px;">PROFILING</span>
<svg width="16" height="15" style="left:1px;top:443px"><use href="#tb"/></svg><span class="m " style="left:19px;top:446px;">REFERENTIAL_CONSTRAINTS</span>
<svg width="16" height="15" style="left:251px;top:1px"><use href="#tb"/></svg><span class="m " style="left:269px;top:4px;">ROUTINES</span>
<svg width="16" height="15" style="left:251px;top:18px"><use href="#tb"/></svg><span class="m " style="left:269px;top:21px;">SCHEMA_PRIVILEGES</span>
<svg width="16" height="15" style="left:251px;top:35px"><use href="#tb"/></svg><span class="m " style="left:269px;top:38px;">SCHEMATA</span>
<svg width="16" height="15" style="left:251px;top:52px"><use href="#tb"/></svg><span class="m " style="left:269px;top:55px;">SESSION_STATUS</span>
<svg width="16" height="15" style="left:251px;top:69px"><use href="#tb"/></svg><span class="m " style="left:269px;top:72px;">SESSION_VARIABLES</span>
<svg width="16" height="15" style="left:251px;top:86px"><use href="#tb"/></svg><span class="m " style="left:269px;top:89px;">STATISTICS</span>
<svg width="16" height="15" style="left:251px;top:103px"><use href="#tb"/></svg><span class="m " style="left:269px;top:106px;">TABLE_CONSTRAINTS</span>
<svg width="16" height="15" style="left:251px;top:120px"><use href="#tb"/></svg><span class="m " style="left:269px;top:123px;">TABLE_PRIVILEGES</span>
<svg width="16" height="15" style="left:251px;top:137px"><use href="#tb"/></svg><span class="m " style="left:269px;top:140px;">TABLES</span>
<svg width="16" height="15" style="left:251px;top:154px"><use href="#tb"/></svg><span class="m " style="left:269px;top:157px;">TABLESPACES</span>
<svg width="16" height="15" style="left:251px;top:171px"><use href="#tb"/></svg><span class="m " style="left:269px;top:174px;">TRIGGERS</span>
<svg width="16" height="15" style="left:251px;top:188px"><use href="#tb"/></svg><span class="m " style="left:269px;top:191px;">USER_PRIVILEGES</span>
<svg width="16" height="15" style="left:251px;top:205px"><use href="#tb"/></svg><span class="m " style="left:269px;top:208px;">VIEWS</span>
</div>
<div id="status" style="left:4px;top:643px;width:960px;height:20px">
<div style="left:0px;top:0px;width:250px;height:1px;background:#808080;"></div><div style="left:0px;top:0px;width:1px;height:19px;background:#808080;"></div><div style="left:0px;top:19px;width:250px;height:1px;background:#fff;"></div><div style="left:249px;top:0px;width:1px;height:20px;background:#fff;"></div>
<span class="m " style="left:3px;top:5px;">40</span><span class="c " style="left:21px;top:5px;width:12px;"><svg width="12" height="12" style="left:0;top:0" fill="currentColor"><use href="#u8868" x="0"/></svg><i>表</i></span><span class="m " style="left:39px;top:5px;">(40</span><span class="c " style="left:63px;top:5px;width:72px;"><svg width="72" height="12" style="left:0;top:0" fill="currentColor"><use href="#u4f4d" x="0"/><use href="#u4e8e" x="12"/><use href="#u5f53" x="24"/><use href="#u524d" x="36"/><use href="#u7684" x="48"/><use href="#u7ec4" x="60"/></svg><i>位于当前的组</i></span><span class="m " style="left:135px;top:5px;">)</span>
<div style="left:252px;top:0px;width:637px;height:1px;background:#808080;"></div><div style="left:252px;top:0px;width:1px;height:19px;background:#808080;"></div><div style="left:252px;top:19px;width:637px;height:1px;background:#fff;"></div><div style="left:888px;top:0px;width:1px;height:20px;background:#fff;"></div>
<svg width="16" height="15" style="left:255px;top:2px"><use href="#cn"/></svg>
<span class="m " style="left:276px;top:5px;">1</span><span class="c " style="left:299px;top:5px;width:24px;"><svg width="24" height="12" style="left:0;top:0" fill="currentColor"><use href="#u7528" x="0"/><use href="#u6237" x="12"/></svg><i>用户</i></span><span class="m " style="left:323px;top:5px;">: root</span><span class="c " style="left:376px;top:5px;width:36px;"><svg width="36" height="12" style="left:0;top:0" fill="currentColor"><use href="#u6570" x="0"/><use href="#u636e" x="12"/><use href="#u5e93" x="24"/></svg><i>数据库</i></span><span class="m " style="left:412px;top:5px;">: information_schema</span>
<div style="left:891px;top:-1px;width:22px;height:21px;background:conic-gradient(#fff 25%,#D4D0C8 0 50%,#fff 0 75%,#D4D0C8 0) 0 0/2px 2px"><div style="left:0px;top:0px;width:21px;height:1px;background:#808088;"></div><div style="left:0px;top:0px;width:2px;height:20px;background:#808088;"></div><div style="left:0px;top:20px;width:22px;height:1px;background:#fff;"></div><div style="left:21px;top:0px;width:1px;height:21px;background:#fff;"></div></div>
<svg width="13" height="11" viewBox="0 0 13 11" style="left:896px;top:5px" ><g shape-rendering="crispEdges" fill="#555957"><rect x="0" y="0" width="3" height="2"/><rect x="5" y="0" width="3" height="2"/><rect x="10" y="0" width="3" height="2"/><rect x="0" y="3" width="3" height="2"/><rect x="5" y="3" width="3" height="2"/><rect x="10" y="3" width="3" height="2"/><rect x="0" y="6" width="3" height="2"/><rect x="5" y="6" width="3" height="2"/><rect x="10" y="6" width="3" height="2"/><rect x="0" y="9" width="3" height="2"/><rect x="5" y="9" width="3" height="2"/><rect x="10" y="9" width="3" height="2"/></g></svg>
<svg width="15" height="11" viewBox="0 0 15 11" style="left:916px;top:4px" ><g shape-rendering="crispEdges" fill="#555957"><rect x="0" y="0" width="3" height="2"/><rect x="4" y="1" width="10" height="1"/><rect x="0" y="3" width="3" height="2"/><rect x="4" y="4" width="10" height="1"/><rect x="0" y="6" width="3" height="2"/><rect x="4" y="7" width="10" height="1"/><rect x="0" y="9" width="3" height="2"/><rect x="4" y="10" width="10" height="1"/></g></svg>
<svg width="14" height="14" viewBox="0 0 14 14" style="left:937px;top:2px" ><g shape-rendering="crispEdges" fill="#555957"><rect x="2" y="0" width="1" height="14"/><rect x="0" y="2" width="14" height="1"/><rect x="5" y="0" width="1" height="14"/><rect x="0" y="5" width="14" height="1"/><rect x="8" y="0" width="1" height="14"/><rect x="0" y="8" width="14" height="1"/><rect x="11" y="0" width="1" height="14"/><rect x="0" y="11" width="14" height="1"/></g></svg>
<div style="left:959px;top:0px;width:1px;height:20px;background:#fff;"></div>
</div>
</div>
</body></html>
